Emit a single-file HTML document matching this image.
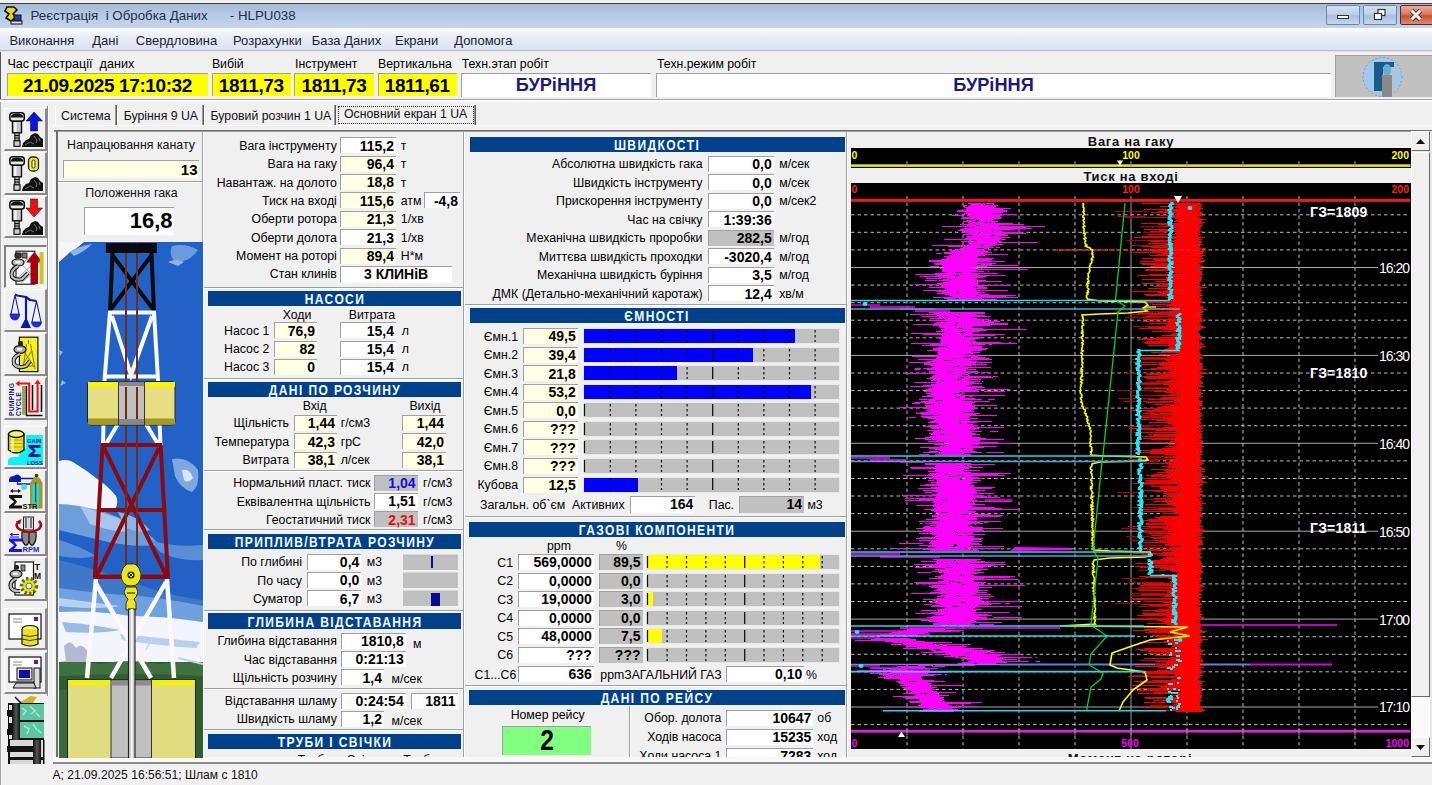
<!DOCTYPE html><html><head><meta charset="utf-8"><style>
html,body{margin:0;padding:0;background:#f0f0f0;}
body{width:1432px;height:785px;overflow:hidden;position:relative;background:#f0f0f0;font-family:"Liberation Sans",sans-serif;}
.t{position:absolute;white-space:pre;line-height:1;}
.r{position:absolute;}
svg{position:absolute;}
</style></head><body>
<div class="r" style="left:0.0px;top:0.0px;width:1432.0px;height:3.0px;background:#f2f2f2;"></div>
<div class="r" style="left:0.0px;top:3.0px;width:1432.0px;height:1.0px;background:#3a3f46;"></div>
<div class="r" style="left:0.0px;top:4.0px;width:1.0px;height:96.0px;background:#50555c;"></div>
<div class="r" style="left:0.0px;top:100.0px;width:1.0px;height:685.0px;background:#a8a8a8;"></div>
<div class="r" style="left:0.0px;top:4.0px;width:1432.0px;height:24.0px;background:linear-gradient(#a3bbd8,#b5cbe4 45%,#c3d5ea);"></div>
<div class="r" style="left:0.0px;top:28.0px;width:1432.0px;height:22.0px;background:linear-gradient(#fdfdfe,#e9edf7 40%,#dbe2f1);"></div>
<div class="r" style="left:0.0px;top:50.0px;width:1432.0px;height:1.0px;background:#b8bcc4;"></div>
<div class="r" style="left:0.0px;top:51.0px;width:1432.0px;height:1.0px;background:#e4e4e4;"></div>
<div class="t" style="left:30.5px;top:9.0px;font-size:13.3px;color:#1e2f4a;">Реєстрація  і Обробка Даних      - HLPU038</div>
<svg style="left:3px;top:5px" width="20" height="20" viewBox="0 0 20 20">
<path d="M4 2 L11 2 L14 5 L10 9 L13 12 L8 16 L3 13 L6 9 L2 6 Z" fill="#e8d820" stroke="#111" stroke-width="1.6"/>
<rect x="11" y="10" width="7" height="6" fill="#2a3aa8" stroke="#111" stroke-width="1"/>
<rect x="8" y="16" width="11" height="3" fill="#ddd" stroke="#111" stroke-width="1"/>
</svg>
<div class="r" style="left:1326.0px;top:5.0px;width:34.0px;height:20.0px;background:linear-gradient(#d4e2f1,#bcd0e8 45%,#a8c0dc 55%,#c4d8ee);border:1px solid #6f86a8;border-radius:2px;box-sizing:border-box;"></div>
<div class="r" style="left:1363.0px;top:5.0px;width:34.0px;height:20.0px;background:linear-gradient(#d4e2f1,#bcd0e8 45%,#a8c0dc 55%,#c4d8ee);border:1px solid #6f86a8;border-radius:2px;box-sizing:border-box;"></div>
<div class="r" style="left:1400.0px;top:5.0px;width:36.0px;height:20.0px;background:linear-gradient(#eeaa9a,#db7a64 45%,#c9502f 55%,#df8c74);border:1px solid #5a2a22;border-radius:2px;box-sizing:border-box;"></div>
<div class="r" style="left:1337.0px;top:15.0px;width:12.0px;height:4.0px;background:#fff;border:1px solid #333;box-sizing:border-box;"></div>
<svg style="left:1373px;top:8px" width="14" height="14" viewBox="0 0 14 14">
<rect x="5" y="1.5" width="7" height="6" fill="#fff" stroke="#333" stroke-width="1.2"/>
<rect x="1.5" y="5.5" width="7" height="6" fill="#fff" stroke="#333" stroke-width="1.2"/>
</svg>
<svg style="left:1408px;top:8px" width="16" height="14" viewBox="0 0 16 14">
<path d="M3.5 2.5 L12.5 11.5 M12.5 2.5 L3.5 11.5" stroke="#4a2a24" stroke-width="4.6"/>
<path d="M3.5 2.5 L12.5 11.5 M12.5 2.5 L3.5 11.5" stroke="#fafafa" stroke-width="3"/>
</svg>
<div class="t" style="left:9.4px;top:33.6px;font-size:13.0px;color:#1e1e32;">Виконання</div>
<div class="t" style="left:92.2px;top:33.6px;font-size:13.0px;color:#1e1e32;">Дані</div>
<div class="t" style="left:135.8px;top:33.6px;font-size:13.0px;color:#1e1e32;">Свердловина</div>
<div class="t" style="left:233.0px;top:33.6px;font-size:13.0px;color:#1e1e32;">Розрахунки</div>
<div class="t" style="left:311.8px;top:33.6px;font-size:13.0px;color:#1e1e32;">База Даних</div>
<div class="t" style="left:395.0px;top:33.6px;font-size:13.0px;color:#1e1e32;">Екрани</div>
<div class="t" style="left:454.2px;top:33.6px;font-size:13.0px;color:#1e1e32;">Допомога</div>
<div class="t" style="left:7.4px;top:58.0px;font-size:12.6px;color:#000;">Час реєстрації  даних</div>
<div class="t" style="left:211.9px;top:58.3px;font-size:12.3px;color:#000;">Вибій</div>
<div class="t" style="left:295.0px;top:58.3px;font-size:12.3px;color:#000;">Інструмент</div>
<div class="t" style="left:378.0px;top:58.3px;font-size:12.3px;color:#000;">Вертикальна</div>
<div class="t" style="left:461.7px;top:58.3px;font-size:12.3px;color:#000;">Техн.этап робіт</div>
<div class="t" style="left:657.0px;top:58.3px;font-size:12.3px;color:#000;">Техн.режим робіт</div>
<div class="r" style="left:7.0px;top:73.0px;width:201.0px;height:23.0px;background:#ffff00;border-top:1px solid #a0a0a0;border-left:1px solid #a0a0a0;box-sizing:border-box;"></div>
<div class="t" style="left:-192.5px;width:600px;text-align:center;top:75.5px;font-size:19px;font-weight:bold;color:#000;letter-spacing:-0.4px;">21.09.2025 17:10:32</div>
<div class="r" style="left:211.5px;top:73.0px;width:79.5px;height:23.0px;background:#ffff00;border-top:1px solid #a0a0a0;border-left:1px solid #a0a0a0;box-sizing:border-box;"></div>
<div class="t" style="left:-48.8px;width:600px;text-align:center;top:75.5px;font-size:19px;font-weight:bold;color:#000;letter-spacing:-0.4px;">1811,73</div>
<div class="r" style="left:294.0px;top:73.0px;width:80.0px;height:23.0px;background:#ffff00;border-top:1px solid #a0a0a0;border-left:1px solid #a0a0a0;box-sizing:border-box;"></div>
<div class="t" style="left:34.0px;width:600px;text-align:center;top:75.5px;font-size:19px;font-weight:bold;color:#000;letter-spacing:-0.4px;">1811,73</div>
<div class="r" style="left:377.5px;top:73.0px;width:79.5px;height:23.0px;background:#ffff00;border-top:1px solid #a0a0a0;border-left:1px solid #a0a0a0;box-sizing:border-box;"></div>
<div class="t" style="left:117.2px;width:600px;text-align:center;top:75.5px;font-size:19px;font-weight:bold;color:#000;letter-spacing:-0.4px;">1811,61</div>
<div class="r" style="left:460.5px;top:73.0px;width:190.5px;height:24.0px;background:#fff;border-top:1px solid #a0a0a0;border-left:1px solid #a0a0a0;box-sizing:border-box;"></div>
<div class="t" style="left:256.0px;width:600px;text-align:center;top:76.1px;font-size:18.2px;font-weight:bold;color:#1a1a7e;">БУРіННЯ</div>
<div class="r" style="left:656.0px;top:73.0px;width:675.0px;height:24.0px;background:#fff;border-top:1px solid #a0a0a0;border-left:1px solid #a0a0a0;box-sizing:border-box;"></div>
<div class="t" style="left:693.5px;width:600px;text-align:center;top:76.1px;font-size:18.2px;font-weight:bold;color:#1a1a7e;">БУРіННЯ</div>
<div class="r" style="left:1335.0px;top:55.0px;width:97.0px;height:42.0px;background:#c0c0c0;border-top:1px solid #a0a0a0;border-left:1px solid #a0a0a0;box-sizing:border-box;"></div>
<svg style="left:1357px;top:55px" width="52" height="42" viewBox="0 0 52 42">
<circle cx="25.5" cy="22" r="19.5" fill="#9ec8ec" stroke="#7a8fa6" stroke-width="0.8" stroke-dasharray="2 2"/>
<rect x="17" y="7" width="20" height="29" fill="#1c5b86"/>
<rect x="26" y="12" width="11" height="30" fill="#c0c0c0"/>
<ellipse cx="30" cy="15" rx="4" ry="6" fill="#56b3d2"/>
<path d="M25 20 L35 20 L35 42 L25 42 Z" fill="#8a8a8a"/>
</svg>
<div class="r" style="left:0.0px;top:99.0px;width:1432.0px;height:1.0px;background:#a8a8a8;"></div>
<div class="r" style="left:0.0px;top:100.0px;width:1432.0px;height:1.5px;background:#fcfcfc;"></div>
<div class="r" style="left:47.0px;top:106.0px;width:1.0px;height:590.0px;background:#8c8c8c;"></div>
<div class="r" style="left:48.0px;top:106.0px;width:1.0px;height:590.0px;background:#fff;"></div>
<div class="r" style="left:4.0px;top:108.0px;width:43.0px;height:43.0px;background:#f0f0f0;border-top:1px solid #fff;border-left:1px solid #fff;border-bottom:2px solid #8a8a8a;border-right:2px solid #8a8a8a;box-sizing:border-box;"></div>
<div class="r" style="left:4.0px;top:152.0px;width:43.0px;height:43.0px;background:#f0f0f0;border-top:1px solid #fff;border-left:1px solid #fff;border-bottom:2px solid #8a8a8a;border-right:2px solid #8a8a8a;box-sizing:border-box;"></div>
<div class="r" style="left:4.0px;top:196.0px;width:43.0px;height:42.0px;background:#f0f0f0;border-top:1px solid #fff;border-left:1px solid #fff;border-bottom:2px solid #8a8a8a;border-right:2px solid #8a8a8a;box-sizing:border-box;"></div>
<div class="r" style="left:4.0px;top:245.0px;width:43.0px;height:43.0px;background:#f4f4f4;border-top:2px solid #808080;border-left:2px solid #808080;border-bottom:1px solid #fff;border-right:1px solid #fff;box-sizing:border-box;"></div>
<div class="r" style="left:4.0px;top:289.0px;width:43.0px;height:43.0px;background:#f0f0f0;border-top:1px solid #fff;border-left:1px solid #fff;border-bottom:2px solid #8a8a8a;border-right:2px solid #8a8a8a;box-sizing:border-box;"></div>
<div class="r" style="left:4.0px;top:333.0px;width:43.0px;height:43.0px;background:#f0f0f0;border-top:1px solid #fff;border-left:1px solid #fff;border-bottom:2px solid #8a8a8a;border-right:2px solid #8a8a8a;box-sizing:border-box;"></div>
<div class="r" style="left:4.0px;top:377.0px;width:43.0px;height:43.0px;background:#f0f0f0;border-top:1px solid #fff;border-left:1px solid #fff;border-bottom:2px solid #8a8a8a;border-right:2px solid #8a8a8a;box-sizing:border-box;"></div>
<div class="r" style="left:4.0px;top:426.0px;width:43.0px;height:43.0px;background:#f0f0f0;border-top:1px solid #fff;border-left:1px solid #fff;border-bottom:2px solid #8a8a8a;border-right:2px solid #8a8a8a;box-sizing:border-box;"></div>
<div class="r" style="left:4.0px;top:470.0px;width:43.0px;height:43.0px;background:#f0f0f0;border-top:1px solid #fff;border-left:1px solid #fff;border-bottom:2px solid #8a8a8a;border-right:2px solid #8a8a8a;box-sizing:border-box;"></div>
<div class="r" style="left:4.0px;top:513.0px;width:43.0px;height:43.0px;background:#f0f0f0;border-top:1px solid #fff;border-left:1px solid #fff;border-bottom:2px solid #8a8a8a;border-right:2px solid #8a8a8a;box-sizing:border-box;"></div>
<div class="r" style="left:4.0px;top:557.0px;width:43.0px;height:44.0px;background:#f0f0f0;border-top:1px solid #fff;border-left:1px solid #fff;border-bottom:2px solid #8a8a8a;border-right:2px solid #8a8a8a;box-sizing:border-box;"></div>
<div class="r" style="left:4.0px;top:608.0px;width:43.0px;height:42.0px;background:#f0f0f0;border-top:1px solid #fff;border-left:1px solid #fff;border-bottom:2px solid #8a8a8a;border-right:2px solid #8a8a8a;box-sizing:border-box;"></div>
<div class="r" style="left:4.0px;top:652.0px;width:43.0px;height:42.0px;background:#f0f0f0;border-top:1px solid #fff;border-left:1px solid #fff;border-bottom:2px solid #8a8a8a;border-right:2px solid #8a8a8a;box-sizing:border-box;"></div>
<svg style="left:4px;top:108px" width="43" height="43" viewBox="0 0 43 43"><g transform="translate(5,4)">
<rect x="0.8" y="0.8" width="14.5" height="8.5" rx="3" fill="#e8e8e8" stroke="#111" stroke-width="1.5"/>
<path d="M1.5 5.5 Q2 1.5 8 1.5 Q14 1.5 14.5 5.5 Z" fill="#111"/>
<rect x="3.5" y="9.3" width="9" height="11.5" fill="#c8c8c8" stroke="#111" stroke-width="1.4"/>
<rect x="5" y="10" width="2.5" height="10" fill="#f4f4f4"/>
<rect x="5.8" y="20.8" width="4.4" height="8" fill="#aaa" stroke="#111" stroke-width="1.1"/>
<path d="M5.8 23.5 H10.2 M5.8 26 H10.2" stroke="#111" stroke-width="1"/>
<rect x="5" y="28.8" width="6" height="5.5" fill="#d0d0d0" stroke="#111" stroke-width="1.2"/>
</g><path d="M22 13 L30 4 L38.5 13 L33.5 13 L33.5 23 L26.5 23 L26.5 13 Z" fill="#0a14e6" stroke="#000" stroke-width="0.5"/><path transform="translate(18,24)" d="M0 15 L1 11 L4 8 L7 7 L9 3 L13 1 L16 2 L18 5 L21 7 L21 15 Z" fill="#111"/><path transform="translate(18,24)" d="M3 13 L8 10 L12 12 M12 4 L15 8 L14 11 M17 6 L18 9" stroke="#888" stroke-width="0.8" fill="none"/></svg>
<svg style="left:4px;top:152px" width="43" height="43" viewBox="0 0 43 43"><g transform="translate(5,4)">
<rect x="0.8" y="0.8" width="14.5" height="8.5" rx="3" fill="#e8e8e8" stroke="#111" stroke-width="1.5"/>
<path d="M1.5 5.5 Q2 1.5 8 1.5 Q14 1.5 14.5 5.5 Z" fill="#111"/>
<rect x="3.5" y="9.3" width="9" height="11.5" fill="#c8c8c8" stroke="#111" stroke-width="1.4"/>
<rect x="5" y="10" width="2.5" height="10" fill="#f4f4f4"/>
<rect x="5.8" y="20.8" width="4.4" height="8" fill="#aaa" stroke="#111" stroke-width="1.1"/>
<path d="M5.8 23.5 H10.2 M5.8 26 H10.2" stroke="#111" stroke-width="1"/>
<rect x="5" y="28.8" width="6" height="5.5" fill="#d0d0d0" stroke="#111" stroke-width="1.2"/>
</g><rect x="24.5" y="5" width="10" height="14" rx="4" fill="#f2ef1a" stroke="#222" stroke-width="1.3"/><rect x="28" y="8" width="3" height="8" rx="1.2" fill="#fff" stroke="#222" stroke-width="1"/><path transform="translate(18,24)" d="M0 15 L1 11 L4 8 L7 7 L9 3 L13 1 L16 2 L18 5 L21 7 L21 15 Z" fill="#111"/><path transform="translate(18,24)" d="M3 13 L8 10 L12 12 M12 4 L15 8 L14 11 M17 6 L18 9" stroke="#888" stroke-width="0.8" fill="none"/></svg>
<svg style="left:4px;top:196px" width="43" height="43" viewBox="0 0 43 43"><g transform="translate(5,4)">
<rect x="0.8" y="0.8" width="14.5" height="8.5" rx="3" fill="#e8e8e8" stroke="#111" stroke-width="1.5"/>
<path d="M1.5 5.5 Q2 1.5 8 1.5 Q14 1.5 14.5 5.5 Z" fill="#111"/>
<rect x="3.5" y="9.3" width="9" height="11.5" fill="#c8c8c8" stroke="#111" stroke-width="1.4"/>
<rect x="5" y="10" width="2.5" height="10" fill="#f4f4f4"/>
<rect x="5.8" y="20.8" width="4.4" height="8" fill="#aaa" stroke="#111" stroke-width="1.1"/>
<path d="M5.8 23.5 H10.2 M5.8 26 H10.2" stroke="#111" stroke-width="1"/>
<rect x="5" y="28.8" width="6" height="5.5" fill="#d0d0d0" stroke="#111" stroke-width="1.2"/>
</g><path d="M26.5 3 L33.5 3 L33.5 12 L38.5 12 L30 21 L22 12 L26.5 12 Z" fill="#f01010" stroke="#000" stroke-width="0.5"/><path transform="translate(18,24)" d="M0 15 L1 11 L4 8 L7 7 L9 3 L13 1 L16 2 L18 5 L21 7 L21 15 Z" fill="#111"/><path transform="translate(18,24)" d="M3 13 L8 10 L12 12 M12 4 L15 8 L14 11 M17 6 L18 9" stroke="#888" stroke-width="0.8" fill="none"/></svg>
<svg style="left:4px;top:245px" width="43" height="43" viewBox="0 0 43 43"><rect x="12" y="6.2" width="18.8" height="33" fill="#fff" stroke="#111" stroke-width="1.1"/>
<path d="M12.5 24 L30 8 M12.5 34 L30 18 M16 39 L30 27 M16 7 L30 21 M12.5 14 L30 32" stroke="#8a9a9a" stroke-width="0.9"/>
<rect x="11" y="8" width="6" height="5" rx="1.5" fill="#333" stroke="#111"/>
<rect x="18" y="8" width="5" height="5" fill="#777" stroke="#111" stroke-width="0.8"/>
<ellipse cx="14" cy="17.5" rx="6" ry="3.5" fill="#bbb" stroke="#111" stroke-width="1.2"/>
<rect x="11.5" y="16" width="5" height="2.5" fill="#f4f4f4"/>
<path d="M14 21 Q6 25 8 32 Q12 36 18 34 L24 28" stroke="#111" stroke-width="4.2" fill="none"/>
<path d="M14 21 Q6 25 8 32 Q12 36 18 34 L24 28" stroke="#bdbdbd" stroke-width="2.2" fill="none"/>
<path d="M22 17.5 L30.5 7 L39 17.5 L34 17.5 L34 39 L26.5 39 L26.5 17.5 Z" fill="#a8000c"/>
<rect x="35.6" y="7" width="4" height="32" fill="#c8c820"/></svg>
<svg style="left:4px;top:289px" width="43" height="43" viewBox="0 0 43 43"><path d="M11 5.5 L13 6.5 L22 8 L26 11 L32.5 12" stroke="#0c1aa8" stroke-width="2.2" fill="none" stroke-linejoin="round"/>
<path d="M22 8 L22 31" stroke="#0c1aa8" stroke-width="2.2"/>
<path d="M20.5 31 L23.5 31 L27 39 L16.5 39 Z" fill="#0c1aa8"/>
<path d="M11 6 L7 25 M11 6 L15 25 M32.5 12 L28 33 M32.5 12 L37 33" stroke="#0c1aa8" stroke-width="1.1" fill="none"/>
<path d="M6 25 L15.7 25 Q15 31 11 31 Q6.5 31 6 25 Z" fill="#1d2ed8" stroke="#0c1aa8" stroke-width="0.8"/>
<path d="M27.5 33 L37.5 33 Q37 38 32.5 38 Q28 38 27.5 33 Z" fill="#1d2ed8" stroke="#0c1aa8" stroke-width="0.8"/></svg>
<svg style="left:4px;top:333px" width="43" height="43" viewBox="0 0 43 43"><rect x="15.4" y="4.2" width="18.5" height="34.4" fill="#f4f018" stroke="#111" stroke-width="1.2"/>
<path d="M24.5 7 L24.5 11 M22.5 11 L19 36 M26.5 11 L31 36 M21 20 L29 32 M28 18 L19.5 30 M20 33 L31 33" stroke="#7a7a20" stroke-width="1" fill="none"/>
<rect x="14" y="8" width="5" height="4.5" rx="1.5" fill="#222"/>
<ellipse cx="16" cy="16.5" rx="6" ry="3.8" fill="#aaa" stroke="#111" stroke-width="1.2"/>
<rect x="13" y="15" width="5" height="2.5" fill="#f4f4f4"/>
<path d="M16 21 Q8 24 10 31 Q14 36 22 33 L26 28" stroke="#111" stroke-width="4.2" fill="none"/>
<path d="M16 21 Q8 24 10 31 Q14 36 22 33 L26 28" stroke="#bdbdbd" stroke-width="2.2" fill="none"/></svg>
<svg style="left:4px;top:377px" width="43" height="43" viewBox="0 0 43 43"><text x="10" y="39" transform="rotate(-90 10 39)" font-family="Liberation Sans" font-weight="bold" font-size="6.8" fill="#1a1a78" letter-spacing="0.2">PUMPING</text>
<text x="17" y="39" transform="rotate(-90 17 39)" font-family="Liberation Sans" font-weight="bold" font-size="6.8" fill="#1a1a78" letter-spacing="0.2">CYCLE</text>
<rect x="18" y="9" width="4" height="29" fill="#a0b060"/>
<path d="M18.5 10 H21.5 M18.5 13 H21.5 M18.5 16 H21.5 M18.5 19 H21.5 M18.5 22 H21.5 M18.5 25 H21.5 M18.5 28 H21.5 M18.5 31 H21.5 M18.5 34 H21.5" stroke="#6a7a30" stroke-width="0.6"/>
<path d="M22.5 9 L22.5 38.5 L38.5 38.5" stroke="#111" stroke-width="1.3" fill="none"/>
<path d="M28.5 8 V33 M37.5 8 V35" stroke="#111" stroke-width="1.6"/>
<path d="M14 6.5 H25.2 V34.5 H33.6 V5" stroke="#f01010" stroke-width="2" fill="none"/>
<path d="M11.5 6.5 L15.5 3.5 L15.5 9.5 Z M33.6 2.5 L30.5 7 L36.7 7 Z" fill="#f01010"/></svg>
<svg style="left:4px;top:426px" width="43" height="43" viewBox="0 0 43 43"><path d="M4 39 L4 34 Q5 31 10 31 L22 31 L22 9 L39 9 L39 39 Z" fill="#10f0f8"/>
<path d="M16 27 L22 22 L22 31 L14 31 Z" fill="#10f0f8"/>
<path d="M4.5 8 L4.5 24 Q12.25 30 20 24 L20 8 Z" fill="#e8e020" stroke="#111" stroke-width="1.4"/>
<ellipse cx="12.25" cy="8" rx="7.75" ry="3.5" fill="#f4f080" stroke="#111" stroke-width="1.4"/>
<path d="M6 14 H19 M6 17.5 H19 M6 21 H19" stroke="#a8a010" stroke-width="0.8"/>
<rect x="7" y="12" width="3" height="14" fill="#f8f8b0" opacity="0.7"/>
<text x="23" y="16.5" font-family="Liberation Sans" font-weight="bold" font-size="5.8" fill="#10107a">GAIN</text>
<path d="M24.5 19 H36.5 V21.64 H29.060000000000002 L31.939999999999998 25.0 L29.060000000000002 28.36 H36.5 V31 H24.5 V28.84 L29.3 25.0 L24.5 21.16 Z" fill="#10107a"/>
<text x="23" y="38.5" font-family="Liberation Sans" font-weight="bold" font-size="5.8" fill="#10107a">LOSS</text></svg>
<svg style="left:4px;top:470px" width="43" height="43" viewBox="0 0 43 43"><path d="M5 9 Q6 6 10 6 Q12 3.5 15 5 L17 7 L17 12 L5 12 Z" fill="#0c1aa8"/>
<path d="M16 8.5 H31 M13.5 12 V14 H28" stroke="#0c1aa8" stroke-width="1.3" fill="none"/>
<circle cx="20" cy="17" r="2.8" fill="#40e0e8" stroke="#90c0c8" stroke-width="0.6"/>
<path d="M26 38.5 L26 13 Q29 8 32.5 5 Q36 8 38.5 13 L38.5 38.5 Z" fill="#a09a20"/>
<path d="M29.5 14 V36 M34 14 V36" stroke="#10e0f8" stroke-width="2.2"/>
<path d="M31.7 12 V32" stroke="#0a50a0" stroke-width="1"/>
<circle cx="32.5" cy="5.5" r="1.8" fill="#333"/>
<path d="M7 21 H16" stroke="#111" stroke-width="1.2"/><path d="M6 21 L9 19 L9 23 Z M17 21 L14 19 L14 23 Z" fill="#111"/>
<path d="M5 25 H18 V27.97 H9.940000000000001 L13.06 31.75 L9.940000000000001 35.53 H18 V38.5 H5 V36.07 L10.2 31.75 L5 27.43 Z" fill="#111"/>
<text x="18.5" y="38.5" font-family="Liberation Sans" font-weight="bold" font-size="7.5" fill="#222">STR</text></svg>
<svg style="left:4px;top:513px" width="43" height="43" viewBox="0 0 43 43"><rect x="19.5" y="4" width="10" height="13" fill="#d8d8d8" stroke="#222" stroke-width="1"/>
<path d="M22 5 V15 M27 5 V15" stroke="#444" stroke-width="1.3"/>
<path d="M18 19 Q17 28 21 32 Q24 33 25 28 Q26 33 29 32 Q33 28 32 19 Z" fill="#888" stroke="#111" stroke-width="1.2"/>
<path d="M25 19 V30" stroke="#111" stroke-width="1.2"/>
<path d="M14 9 Q11 13 15 16 Q25 22 35 16 Q39 12 35 8" stroke="#a00c10" stroke-width="2.6" fill="none"/>
<path d="M12 8.5 L17.5 6 L16 11.5 Z" fill="#a00c10"/>
<path d="M6 21.5 H15 M6 24 H15" stroke="#1616e8" stroke-width="1.2"/><path d="M5.5 21.5 L8.5 19.5 L8.5 23.5 Z" fill="#1616e8"/>
<path d="M5 25.5 H18 V28.47 H9.940000000000001 L13.06 32.25 L9.940000000000001 36.03 H18 V39.0 H5 V36.57 L10.2 32.25 L5 27.93 Z" fill="#1616e8"/>
<text x="18.5" y="39" font-family="Liberation Sans" font-weight="bold" font-size="7.5" fill="#1616e8">RPM</text></svg>
<svg style="left:4px;top:557px" width="43" height="43" viewBox="0 0 43 43"><rect x="11" y="5" width="18.5" height="33" fill="#fff" stroke="#111" stroke-width="1.2"/>
<rect x="10" y="8" width="5" height="4.5" rx="1.5" fill="#222"/>
<rect x="17" y="8" width="4" height="6" fill="#888" stroke="#111" stroke-width="0.8"/>
<ellipse cx="12" cy="17" rx="6" ry="3.8" fill="#aaa" stroke="#111" stroke-width="1.2"/>
<rect x="9" y="15.5" width="5" height="2.5" fill="#f4f4f4"/>
<path d="M12 21.5 Q5 25 7 31 Q10 35 16 34" stroke="#111" stroke-width="4.2" fill="none"/>
<path d="M12 21.5 Q5 25 7 31 Q10 35 16 34" stroke="#bdbdbd" stroke-width="2.2" fill="none"/>
<circle cx="25" cy="29" r="7.5" fill="#d8e020" stroke="#6a6a10" stroke-width="3.5" stroke-dasharray="2.4 2.2"/>
<circle cx="25" cy="29" r="3" fill="#e8e8e8" stroke="#555" stroke-width="0.8"/>
<text x="30.5" y="13" font-family="Liberation Sans" font-weight="bold" font-size="9" fill="#111">T</text>
<text x="30" y="21.5" font-family="Liberation Sans" font-weight="bold" font-size="8.5" fill="#111">M</text></svg>
<svg style="left:4px;top:608px" width="43" height="43" viewBox="0 0 43 43"><rect x="5" y="6" width="32" height="25" fill="#fff" stroke="#111" stroke-width="1.2"/>
<path d="M9 11 H18 M9 14 H18" stroke="#888" stroke-width="1"/>
<rect x="30" y="9" width="4" height="4" fill="#7010a0"/>
<ellipse cx="26" cy="21" rx="8" ry="3.5" fill="#f6f060" stroke="#111" stroke-width="1.2"/>
<path d="M18 21 L18 36 Q26 40 34 36 L34 21" fill="#e8e020" stroke="#111" stroke-width="1.2"/>
<path d="M18 27 Q26 30 34 27 M18 31 Q26 34 34 31" stroke="#111" stroke-width="0.8" fill="none"/></svg>
<svg style="left:4px;top:652px" width="43" height="43" viewBox="0 0 43 43"><rect x="5" y="5" width="32" height="25" fill="#fff" stroke="#111" stroke-width="1.2"/>
<path d="M9 10 H18 M9 13 H18" stroke="#888" stroke-width="1"/>
<rect x="30" y="8" width="4" height="4" fill="#7010a0"/>
<rect x="13" y="16" width="15" height="12" fill="#ddd" stroke="#111"/><rect x="15" y="18" width="11" height="8" fill="#1010a0"/>
<rect x="30" y="16" width="6" height="20" fill="#ddd" stroke="#111"/>
<path d="M9 36 L12 31 H30 L32 36 Z" fill="#ccc" stroke="#111"/></svg>
<svg style="left:0px;top:690px" width="50" height="76" viewBox="0 690 50 76">
<defs><linearGradient id="roll" x1="0" x2="1"><stop offset="0" stop-color="#111"/><stop offset="0.5" stop-color="#555"/><stop offset="1" stop-color="#111"/></linearGradient></defs>
<path d="M15 697 L20 702 L26 699 L30 696 L37 697 L33 703 L22 704 Z" fill="#d8b020"/>
<path d="M15 697 L21 703" stroke="#111" stroke-width="1.5"/>
<rect x="8" y="703" width="36" height="61" fill="#d8d8d8"/>
<rect x="8" y="703" width="36" height="37" fill="#111"/>
<rect x="20" y="704" width="24" height="16" fill="#5cc6a4"/>
<rect x="20" y="722" width="24" height="16" fill="#5cc6a4"/>
<path d="M22 708 l4 3 l-3 4 M30 706 l5 5 l-4 3 M36 713 l4 4 M24 726 l5 3 l-2 5 M33 724 l4 6 M38 730 l3 3" stroke="#a8e8d0" stroke-width="1.5" fill="none"/>
<rect x="12" y="703" width="8" height="37" fill="url(#roll)"/>
<rect x="9" y="705" width="3" height="5" fill="#ddd"/><rect x="9" y="717" width="3" height="6" fill="#ddd"/><rect x="9" y="735" width="3" height="4" fill="#ddd"/>
<rect x="7" y="710" width="5" height="6" fill="#111"/><rect x="7" y="729" width="5" height="6" fill="#111"/>
<rect x="8" y="740" width="2" height="24" fill="#111"/>
<rect x="7" y="746" width="27" height="6" fill="#111"/>
<rect x="8" y="757" width="36" height="3" fill="#111"/>
<rect x="33" y="740" width="8" height="24" fill="url(#roll)"/>
<rect x="43" y="740" width="1.5" height="24" fill="#111"/>
</svg>
<div class="r" style="left:53.0px;top:125.0px;width:1379.0px;height:1.0px;background:#fff;"></div>
<div class="r" style="left:53.0px;top:130.0px;width:1379.0px;height:1.0px;background:#6e6e6e;"></div>
<div class="r" style="left:53.0px;top:131.0px;width:1379.0px;height:1.0px;background:#a0a0a0;"></div>
<div class="r" style="left:55.0px;top:105.0px;width:1.0px;height:20.0px;background:#fff;"></div>
<div class="r" style="left:115.0px;top:105.0px;width:1.0px;height:20.0px;background:#9a9a9a;"></div>
<div class="r" style="left:116.0px;top:105.0px;width:1.0px;height:20.0px;background:#5a5a5a;"></div>
<div class="t" style="left:61.0px;top:109.9px;font-size:12.3px;color:#111;">Система</div>
<div class="r" style="left:117.0px;top:105.0px;width:1.0px;height:20.0px;background:#fff;"></div>
<div class="r" style="left:201.5px;top:105.0px;width:1.0px;height:20.0px;background:#9a9a9a;"></div>
<div class="r" style="left:202.5px;top:105.0px;width:1.0px;height:20.0px;background:#5a5a5a;"></div>
<div class="t" style="left:123.7px;top:109.9px;font-size:12.3px;color:#111;">Буріння 9 UA</div>
<div class="r" style="left:203.5px;top:105.0px;width:1.0px;height:20.0px;background:#fff;"></div>
<div class="r" style="left:334.0px;top:105.0px;width:1.0px;height:20.0px;background:#9a9a9a;"></div>
<div class="r" style="left:335.0px;top:105.0px;width:1.0px;height:20.0px;background:#5a5a5a;"></div>
<div class="t" style="left:210.5px;top:109.9px;font-size:12.3px;color:#111;">Буровий розчин 1 UA</div>
<div class="r" style="left:338.0px;top:105.5px;width:136.0px;height:18.5px;border:1px dotted #333;box-sizing:border-box;"></div>
<div class="r" style="left:474.0px;top:105.0px;width:1.0px;height:20.0px;background:#9a9a9a;"></div>
<div class="r" style="left:475.0px;top:105.0px;width:1.0px;height:20.0px;background:#5a5a5a;"></div>
<div class="t" style="left:344.0px;top:107.6px;font-size:12.3px;color:#111;">Основний екран 1 UA</div>
<div class="r" style="left:53.0px;top:126.0px;width:1.0px;height:636.0px;background:#fff;"></div>
<div class="r" style="left:56.0px;top:131.0px;width:2.0px;height:626.0px;background:#6e6e6e;"></div>
<div class="r" style="left:53.0px;top:757.0px;width:1379.0px;height:4.5px;background:#f8f8f8;"></div>
<div class="r" style="left:53.0px;top:761.5px;width:1379.0px;height:2.0px;background:#8a8a8a;"></div>
<div class="r" style="left:202.0px;top:132.0px;width:1.0px;height:625.0px;background:#a0a0a0;"></div>
<div class="r" style="left:203.0px;top:132.0px;width:1.0px;height:625.0px;background:#fff;"></div>
<div class="t" style="left:-169.0px;width:600px;text-align:center;top:139.1px;font-size:12.4px;color:#111;">Напрацювання канату</div>
<div class="r" style="left:63.0px;top:160.0px;width:136.0px;height:17.5px;background:#ffffe6;border-top:1px solid #a0a0a0;border-left:1px solid #a0a0a0;box-sizing:border-box;"></div>
<div class="t" style="left:-402.5px;width:600px;text-align:right;top:161.6px;font-size:15px;font-weight:bold;color:#000;">13</div>
<div class="r" style="left:58.0px;top:181.0px;width:144.0px;height:1.0px;background:#a0a0a0;"></div>
<div class="r" style="left:58.0px;top:182.0px;width:144.0px;height:1.0px;background:#fff;"></div>
<div class="t" style="left:-168.5px;width:600px;text-align:center;top:187.1px;font-size:12.4px;color:#111;">Положення гака</div>
<div class="r" style="left:84.0px;top:207.0px;width:89.5px;height:27.5px;background:#fff;border-top:1px solid #a0a0a0;border-left:1px solid #a0a0a0;box-sizing:border-box;"></div>
<div class="t" style="left:-427.5px;width:600px;text-align:right;top:210.0px;font-size:22px;font-weight:bold;color:#000;">16,8</div>
<svg style="left:59px;top:242px" width="144" height="516" viewBox="59 242 144 516">
<defs><clipPath id="pc"><rect x="59" y="242" width="144" height="516"/></clipPath></defs>
<g clip-path="url(#pc)">
<rect x="59" y="242" width="144" height="516" fill="#2262c6"/>
<path d="M59 242 L84 242 Q78 248 70 252 Q64 258 59 262 Z" fill="#f4f6fa"/>
<path d="M70 252 Q80 246 92 244 Q84 252 74 256 Z" fill="#8fb3e6"/>
<path d="M172 246 Q186 243 198 250 Q190 262 176 262 Q168 256 172 246 Z" fill="#6c9bdc"/>
<path d="M168 262 Q176 258 184 262 L178 266 Z" fill="#8fb3e6"/>
<path d="M59 350 L63 352 L60 356Z M62 380 L66 383 L60 386Z" fill="#8fb3e6"/>
<!-- lower sky clouds -->
<path d="M59 456 L59 560 Q100 570 140 585 Q170 596 203 600 L203 625 L59 625 Z" fill="#3f78c8"/>
<path d="M59 500 Q90 505 120 518 Q145 528 160 545 Q130 548 100 540 Q75 534 59 530 Z" fill="#6d9edc"/>
<path d="M59 461 Q68 458 76 464 Q86 470 96 478 Q108 486 116 496 Q120 506 112 512 Q96 510 80 506 Q66 504 59 504 Z" fill="#f2f5fb"/>
<path d="M80 506 Q100 512 118 518 Q130 526 124 532 Q106 530 90 524 Z" fill="#a9c6ee"/>
<path d="M118 512 Q138 516 150 530 Q140 534 126 528 Z" fill="#8fb3e6"/>
<path d="M59 540 Q80 546 96 556 Q80 560 59 556 Z" fill="#5a8ed6"/>
<path d="M172 459 Q188 456 198 470 Q200 486 192 492 Q180 488 175 476 Z" fill="#7ea8e0"/>
<path d="M182 470 Q190 468 193 478 Q188 484 184 480 Z" fill="#dbe7f7"/>
<path d="M150 540 Q175 548 203 545 L203 560 Q180 562 160 552 Z" fill="#5a8ed6"/>
<path d="M59 588 Q100 594 140 596 Q175 600 203 606 L203 622 Q160 616 120 618 Q90 614 59 612 Z" fill="#6fa0e0"/>
<path d="M59 598 Q90 602 120 606 Q95 610 59 606 Z" fill="#b8d0f0"/>
<path d="M59 612 Q95 610 130 616 Q165 616 203 622 L203 662 Q150 664 100 662 Q75 662 59 662 Z" fill="#f2f5fb"/>
<path d="M62 622 Q90 624 120 630 Q100 634 66 632 Z" fill="#9cbce8"/>
<path d="M120 634 Q160 638 200 642 L196 648 Q160 646 122 640Z" fill="#b8cff0"/>
<rect x="59" y="662" width="144" height="96" fill="#2d5e2c"/>
<path d="M59 662 Q80 660 100 664 Q130 658 160 664 Q185 660 203 664 L203 676 Q150 672 59 676 Z" fill="#3f7040"/>
<path d="M59 690 L67 690 L67 758 L59 758 Z" fill="#3a6a38"/>
<path d="M64 646 Q70 638 76 648 Q82 642 88 652 L86 662 L66 662 Z" fill="#b4b8d4"/>
<path d="M178 658 L203 664" stroke="#c8d0dc" stroke-width="2"/>
<path d="M146 650 L152 638" stroke="#d0d4e0" stroke-width="1.5"/>
<!-- derrick black top -->
<rect x="105.8" y="243" width="51" height="10" fill="#0a0a0a"/>
<path d="M112.5 253 L110 312 M151.5 253 L154 312 M113 256 L153 309 M151 256 L111 309" stroke="#0a0a0a" stroke-width="4" fill="none"/>
<!-- white section -->
<path d="M110 312 L104.5 380 M154 312 L158 380 M112 316 L131 375 L152 316" stroke="#fafafa" stroke-width="4" fill="none"/>
<rect x="108" y="310.5" width="48" height="4" fill="#fafafa"/>
<rect x="105" y="374.5" width="53" height="4" fill="#fafafa"/>
<path d="M104.5 380 L103 446 M158 380 L160.5 446 M106 444 L118 424 M158 444 L146 424" stroke="#fafafa" stroke-width="4" fill="none"/>
<!-- red section -->
<path d="M102.6 445 L94.8 578 M160.6 445 L168 578 M104 448 L166 575 M159 448 L97 575" stroke="#8a0a10" stroke-width="4" fill="none"/>
<rect x="101" y="443" width="61" height="4" fill="#8a0a10"/>
<rect x="98" y="508" width="67" height="4" fill="#8a0a10"/>
<rect x="93" y="574.5" width="77" height="4.5" fill="#8a0a10"/>
<!-- lower white legs -->
<path d="M96 579 L87 678 M167 579 L174 678 M95 582 L151 678 M166 582 L111 678" stroke="#fafafa" stroke-width="4.5" fill="none"/>
<!-- cables -->
<path d="M126 253 L126 566 M137 253 L137 566" stroke="#7a2a12" stroke-width="2"/>
<!-- traveling block -->
<path d="M90 381.5 L172.5 381.5 L175 384 L175 422 L172.5 425 L90 425 L87.5 422 L87.5 384 Z" fill="#e6de80" stroke="#222" stroke-width="1"/>
<rect x="88" y="382" width="87" height="5" fill="#f8f400"/>
<rect x="88" y="418.5" width="87" height="6" fill="#a49a20"/>
<rect x="118.5" y="381.5" width="26" height="43.5" fill="#c0c0c0" stroke="#333" stroke-width="1"/>
<rect x="119" y="382" width="25" height="4" fill="#888"/>
<rect x="119" y="419" width="25" height="5" fill="#888"/>
<path d="M126 387 L126 419 M137 387 L137 419" stroke="#7a2a12" stroke-width="2"/>
<!-- hook -->
<path d="M127 564 L135 564 L139 568 L141 574 Q141 586 131 586 Q121 586 121 574 L123 568 Z" fill="#ece41e" stroke="#333" stroke-width="1"/>
<circle cx="131" cy="575" r="3" fill="none" stroke="#222" stroke-width="1.2"/><path d="M129 573 L133 577 M133 573 L129 577" stroke="#222" stroke-width="1"/>
<path d="M126 587 L136 587 L138 592 L136 597 L134 599 L136 603 L136 610 L126 610 L126 603 L128 599 L126 597 L124 592 Z" fill="#ece41e" stroke="#333" stroke-width="1"/>
<path d="M127 593 H135" stroke="#555" stroke-width="1.5"/>
<!-- base -->
<rect x="67.5" y="679.5" width="128" height="79" fill="#e0dc80" stroke="#222" stroke-width="1"/>
<rect x="68" y="680" width="127" height="5" fill="#f8f000"/>
<rect x="111" y="680" width="40.5" height="78" fill="#c0c0c0" stroke="#333" stroke-width="1"/>
<rect x="111.5" y="680.5" width="39.5" height="5" fill="#8e8e8e"/>
<!-- pipe -->
<rect x="128.5" y="609" width="6.5" height="150" fill="#c8c8c8" stroke="#222" stroke-width="1.1"/>
<rect x="130.8" y="609" width="2" height="150" fill="#f4f4f4"/>
</g></svg>
<div class="r" style="left:463.0px;top:132.0px;width:1.0px;height:625.0px;background:#a0a0a0;"></div>
<div class="r" style="left:464.0px;top:132.0px;width:1.0px;height:625.0px;background:#fff;"></div>
<div class="t" style="left:-263.2px;width:600px;text-align:right;top:139.8px;font-size:12.3px;color:#000;">Вага інструменту</div>
<div class="r" style="left:340.3px;top:137.3px;width:55.7px;height:16.0px;background:#fff;border-top:1px solid #a0a0a0;border-left:1px solid #a0a0a0;box-sizing:border-box;"></div>
<div class="t" style="left:-206.0px;width:600px;text-align:right;top:138.6px;font-size:14px;font-weight:bold;color:#000;">115,2</div>
<div class="t" style="left:400.8px;top:139.8px;font-size:12.3px;color:#000;">т</div>
<div class="t" style="left:-263.2px;width:600px;text-align:right;top:158.2px;font-size:12.3px;color:#000;">Вага на гаку</div>
<div class="r" style="left:340.3px;top:155.7px;width:55.7px;height:16.0px;background:#ffffe6;border-top:1px solid #a0a0a0;border-left:1px solid #a0a0a0;box-sizing:border-box;"></div>
<div class="t" style="left:-206.0px;width:600px;text-align:right;top:157.0px;font-size:14px;font-weight:bold;color:#000;">96,4</div>
<div class="t" style="left:400.8px;top:158.2px;font-size:12.3px;color:#000;">т</div>
<div class="t" style="left:-263.2px;width:600px;text-align:right;top:176.5px;font-size:12.3px;color:#000;">Навантаж. на долото</div>
<div class="r" style="left:340.3px;top:174.0px;width:55.7px;height:16.0px;background:#ffffe6;border-top:1px solid #a0a0a0;border-left:1px solid #a0a0a0;box-sizing:border-box;"></div>
<div class="t" style="left:-206.0px;width:600px;text-align:right;top:175.4px;font-size:14px;font-weight:bold;color:#000;">18,8</div>
<div class="t" style="left:400.8px;top:176.5px;font-size:12.3px;color:#000;">т</div>
<div class="t" style="left:-263.2px;width:600px;text-align:right;top:194.9px;font-size:12.3px;color:#000;">Тиск на вході</div>
<div class="r" style="left:340.3px;top:192.4px;width:55.7px;height:16.0px;background:#ffffe6;border-top:1px solid #a0a0a0;border-left:1px solid #a0a0a0;box-sizing:border-box;"></div>
<div class="t" style="left:-206.0px;width:600px;text-align:right;top:193.8px;font-size:14px;font-weight:bold;color:#000;">115,6</div>
<div class="t" style="left:400.8px;top:194.9px;font-size:12.3px;color:#000;">атм</div>
<div class="t" style="left:-263.2px;width:600px;text-align:right;top:213.3px;font-size:12.3px;color:#000;">Оберти ротора</div>
<div class="r" style="left:340.3px;top:210.8px;width:55.7px;height:16.0px;background:#ffffe6;border-top:1px solid #a0a0a0;border-left:1px solid #a0a0a0;box-sizing:border-box;"></div>
<div class="t" style="left:-206.0px;width:600px;text-align:right;top:212.1px;font-size:14px;font-weight:bold;color:#000;">21,3</div>
<div class="t" style="left:400.8px;top:213.3px;font-size:12.3px;color:#000;">1/хв</div>
<div class="t" style="left:-263.2px;width:600px;text-align:right;top:231.6px;font-size:12.3px;color:#000;">Оберти долота</div>
<div class="r" style="left:340.3px;top:229.2px;width:55.7px;height:16.0px;background:#fff;border-top:1px solid #a0a0a0;border-left:1px solid #a0a0a0;box-sizing:border-box;"></div>
<div class="t" style="left:-206.0px;width:600px;text-align:right;top:230.5px;font-size:14px;font-weight:bold;color:#000;">21,3</div>
<div class="t" style="left:400.8px;top:231.6px;font-size:12.3px;color:#000;">1/хв</div>
<div class="t" style="left:-263.2px;width:600px;text-align:right;top:250.0px;font-size:12.3px;color:#000;">Момент на роторі</div>
<div class="r" style="left:340.3px;top:247.5px;width:55.7px;height:16.0px;background:#ffffe6;border-top:1px solid #a0a0a0;border-left:1px solid #a0a0a0;box-sizing:border-box;"></div>
<div class="t" style="left:-206.0px;width:600px;text-align:right;top:248.9px;font-size:14px;font-weight:bold;color:#000;">89,4</div>
<div class="t" style="left:400.8px;top:250.0px;font-size:12.3px;color:#000;">Н*м</div>
<div class="r" style="left:424.0px;top:192.4px;width:36.0px;height:16.0px;background:#fff;border-top:1px solid #a0a0a0;border-left:1px solid #a0a0a0;box-sizing:border-box;"></div>
<div class="t" style="left:-142.0px;width:600px;text-align:right;top:193.8px;font-size:14px;font-weight:bold;color:#000;">-4,8</div>
<div class="t" style="left:-263.2px;width:600px;text-align:right;top:268.4px;font-size:12.3px;color:#000;">Стан клинів</div>
<div class="r" style="left:340.3px;top:265.9px;width:111.7px;height:17.0px;background:#fff;border-top:1px solid #a0a0a0;border-left:1px solid #a0a0a0;box-sizing:border-box;"></div>
<div class="t" style="left:96.1px;width:600px;text-align:center;top:267.2px;font-size:14px;font-weight:bold;color:#000;">3 КЛИНіВ</div>
<div class="r" style="left:204.0px;top:286.5px;width:259.0px;height:1.0px;background:#a0a0a0;"></div>
<div class="r" style="left:204.0px;top:287.5px;width:259.0px;height:1.0px;background:#fff;"></div>
<div class="r" style="left:208.2px;top:291.0px;width:252.8px;height:15.0px;background:#004189;"></div>
<div class="t" style="left:34.6px;width:600px;text-align:center;top:291.5px;font-size:14px;font-weight:bold;color:#f4f8ff;letter-spacing:1.6px;transform:scaleX(0.86);">НАСОСИ</div>
<div class="t" style="left:-3.0px;width:600px;text-align:center;top:309.2px;font-size:12.3px;color:#000;">Ходи</div>
<div class="t" style="left:72.0px;width:600px;text-align:center;top:309.2px;font-size:12.3px;color:#000;">Витрата</div>
<div class="t" style="left:-330.7px;width:600px;text-align:right;top:324.7px;font-size:12.3px;color:#000;">Насос 1</div>
<div class="r" style="left:273.6px;top:322.2px;width:43.4px;height:16.0px;background:#ffffe6;border-top:1px solid #a0a0a0;border-left:1px solid #a0a0a0;box-sizing:border-box;"></div>
<div class="t" style="left:-285.0px;width:600px;text-align:right;top:323.5px;font-size:14px;font-weight:bold;color:#000;">76,9</div>
<div class="r" style="left:340.3px;top:322.2px;width:55.7px;height:16.0px;background:#fff;border-top:1px solid #a0a0a0;border-left:1px solid #a0a0a0;box-sizing:border-box;"></div>
<div class="t" style="left:-206.0px;width:600px;text-align:right;top:323.5px;font-size:14px;font-weight:bold;color:#000;">15,4</div>
<div class="t" style="left:401.8px;top:324.7px;font-size:12.3px;color:#000;">л</div>
<div class="t" style="left:-330.7px;width:600px;text-align:right;top:343.1px;font-size:12.3px;color:#000;">Насос 2</div>
<div class="r" style="left:273.6px;top:340.6px;width:43.4px;height:16.0px;background:#ffffe6;border-top:1px solid #a0a0a0;border-left:1px solid #a0a0a0;box-sizing:border-box;"></div>
<div class="t" style="left:-285.0px;width:600px;text-align:right;top:341.9px;font-size:14px;font-weight:bold;color:#000;">82</div>
<div class="r" style="left:340.3px;top:340.6px;width:55.7px;height:16.0px;background:#fff;border-top:1px solid #a0a0a0;border-left:1px solid #a0a0a0;box-sizing:border-box;"></div>
<div class="t" style="left:-206.0px;width:600px;text-align:right;top:341.9px;font-size:14px;font-weight:bold;color:#000;">15,4</div>
<div class="t" style="left:401.8px;top:343.1px;font-size:12.3px;color:#000;">л</div>
<div class="t" style="left:-330.7px;width:600px;text-align:right;top:361.4px;font-size:12.3px;color:#000;">Насос 3</div>
<div class="r" style="left:273.6px;top:358.9px;width:43.4px;height:16.0px;background:#ffffe6;border-top:1px solid #a0a0a0;border-left:1px solid #a0a0a0;box-sizing:border-box;"></div>
<div class="t" style="left:-285.0px;width:600px;text-align:right;top:360.3px;font-size:14px;font-weight:bold;color:#000;">0</div>
<div class="r" style="left:340.3px;top:358.9px;width:55.7px;height:16.0px;background:#fff;border-top:1px solid #a0a0a0;border-left:1px solid #a0a0a0;box-sizing:border-box;"></div>
<div class="t" style="left:-206.0px;width:600px;text-align:right;top:360.3px;font-size:14px;font-weight:bold;color:#000;">15,4</div>
<div class="t" style="left:401.8px;top:361.4px;font-size:12.3px;color:#000;">л</div>
<div class="r" style="left:204.0px;top:378.0px;width:259.0px;height:1.0px;background:#a0a0a0;"></div>
<div class="r" style="left:204.0px;top:379.0px;width:259.0px;height:1.0px;background:#fff;"></div>
<div class="r" style="left:208.2px;top:382.4px;width:252.8px;height:14.6px;background:#004189;"></div>
<div class="t" style="left:34.6px;width:600px;text-align:center;top:382.5px;font-size:14px;font-weight:bold;color:#f4f8ff;letter-spacing:1.6px;transform:scaleX(0.86);">ДАНІ ПО РОЗЧИНУ</div>
<div class="t" style="left:14.7px;width:600px;text-align:center;top:400.2px;font-size:12.3px;color:#000;">Вхід</div>
<div class="t" style="left:125.0px;width:600px;text-align:center;top:400.2px;font-size:12.3px;color:#000;">Вихід</div>
<div class="t" style="left:-311.0px;width:600px;text-align:right;top:417.4px;font-size:12.3px;color:#000;">Щільність</div>
<div class="r" style="left:293.5px;top:414.9px;width:43.5px;height:16.0px;background:#ffffe6;border-top:1px solid #a0a0a0;border-left:1px solid #a0a0a0;box-sizing:border-box;"></div>
<div class="t" style="left:-265.0px;width:600px;text-align:right;top:416.2px;font-size:14px;font-weight:bold;color:#000;">1,44</div>
<div class="t" style="left:340.7px;top:417.4px;font-size:12.3px;color:#000;">г/см3</div>
<div class="r" style="left:402.4px;top:414.9px;width:43.6px;height:16.0px;background:#ffffe6;border-top:1px solid #a0a0a0;border-left:1px solid #a0a0a0;box-sizing:border-box;"></div>
<div class="t" style="left:-156.0px;width:600px;text-align:right;top:416.2px;font-size:14px;font-weight:bold;color:#000;">1,44</div>
<div class="t" style="left:-311.0px;width:600px;text-align:right;top:435.8px;font-size:12.3px;color:#000;">Температура</div>
<div class="r" style="left:293.5px;top:433.3px;width:43.5px;height:16.0px;background:#ffffe6;border-top:1px solid #a0a0a0;border-left:1px solid #a0a0a0;box-sizing:border-box;"></div>
<div class="t" style="left:-265.0px;width:600px;text-align:right;top:434.6px;font-size:14px;font-weight:bold;color:#000;">42,3</div>
<div class="t" style="left:340.7px;top:435.8px;font-size:12.3px;color:#000;">грС</div>
<div class="r" style="left:402.4px;top:433.3px;width:43.6px;height:16.0px;background:#ffffe6;border-top:1px solid #a0a0a0;border-left:1px solid #a0a0a0;box-sizing:border-box;"></div>
<div class="t" style="left:-156.0px;width:600px;text-align:right;top:434.6px;font-size:14px;font-weight:bold;color:#000;">42,0</div>
<div class="t" style="left:-311.0px;width:600px;text-align:right;top:454.1px;font-size:12.3px;color:#000;">Витрата</div>
<div class="r" style="left:293.5px;top:451.6px;width:43.5px;height:16.0px;background:#ffffe6;border-top:1px solid #a0a0a0;border-left:1px solid #a0a0a0;box-sizing:border-box;"></div>
<div class="t" style="left:-265.0px;width:600px;text-align:right;top:453.0px;font-size:14px;font-weight:bold;color:#000;">38,1</div>
<div class="t" style="left:340.7px;top:454.1px;font-size:12.3px;color:#000;">л/сек</div>
<div class="r" style="left:402.4px;top:451.6px;width:43.6px;height:16.0px;background:#ffffe6;border-top:1px solid #a0a0a0;border-left:1px solid #a0a0a0;box-sizing:border-box;"></div>
<div class="t" style="left:-156.0px;width:600px;text-align:right;top:453.0px;font-size:14px;font-weight:bold;color:#000;">38,1</div>
<div class="r" style="left:204.0px;top:470.0px;width:259.0px;height:1.0px;background:#a0a0a0;"></div>
<div class="r" style="left:204.0px;top:471.0px;width:259.0px;height:1.0px;background:#fff;"></div>
<div class="t" style="left:-229.5px;width:600px;text-align:right;top:477.1px;font-size:12.3px;color:#000;">Нормальний пласт. тиск</div>
<div class="r" style="left:374.3px;top:474.6px;width:43.3px;height:16.0px;background:#c0c0c0;border-top:1px solid #a0a0a0;border-left:1px solid #a0a0a0;box-sizing:border-box;"></div>
<div class="t" style="left:-184.4px;width:600px;text-align:right;top:475.9px;font-size:14px;font-weight:bold;color:#1010e0;">1,04</div>
<div class="t" style="left:423.0px;top:477.1px;font-size:12.3px;color:#000;">г/см3</div>
<div class="t" style="left:-229.5px;width:600px;text-align:right;top:495.5px;font-size:12.3px;color:#000;">Еквівалентна щільність</div>
<div class="r" style="left:374.3px;top:493.0px;width:43.3px;height:16.0px;background:#fff;border-top:1px solid #a0a0a0;border-left:1px solid #a0a0a0;box-sizing:border-box;"></div>
<div class="t" style="left:-184.4px;width:600px;text-align:right;top:494.3px;font-size:14px;font-weight:bold;color:#000;">1,51</div>
<div class="t" style="left:423.0px;top:495.5px;font-size:12.3px;color:#000;">г/см3</div>
<div class="t" style="left:-229.5px;width:600px;text-align:right;top:513.8px;font-size:12.3px;color:#000;">Геостатичний тиск</div>
<div class="r" style="left:374.3px;top:511.3px;width:43.3px;height:16.0px;background:#c0c0c0;border-top:1px solid #a0a0a0;border-left:1px solid #a0a0a0;box-sizing:border-box;"></div>
<div class="t" style="left:-184.4px;width:600px;text-align:right;top:512.7px;font-size:14px;font-weight:bold;color:#e01010;">2,31</div>
<div class="t" style="left:423.0px;top:513.8px;font-size:12.3px;color:#000;">г/см3</div>
<div class="r" style="left:204.0px;top:529.0px;width:259.0px;height:1.0px;background:#a0a0a0;"></div>
<div class="r" style="left:204.0px;top:530.0px;width:259.0px;height:1.0px;background:#fff;"></div>
<div class="r" style="left:208.2px;top:534.2px;width:252.8px;height:14.8px;background:#004189;"></div>
<div class="t" style="left:34.6px;width:600px;text-align:center;top:534.5px;font-size:14px;font-weight:bold;color:#f4f8ff;letter-spacing:1.6px;transform:scaleX(0.86);">ПРИПЛИВ/ВТРАТА РОЗЧИНУ</div>
<div class="t" style="left:-298.0px;width:600px;text-align:right;top:556.2px;font-size:12.3px;color:#000;">По глибині</div>
<div class="r" style="left:307.2px;top:553.7px;width:54.1px;height:16.0px;background:#fff;border-top:1px solid #a0a0a0;border-left:1px solid #a0a0a0;box-sizing:border-box;"></div>
<div class="t" style="left:-240.7px;width:600px;text-align:right;top:555.0px;font-size:14px;font-weight:bold;color:#000;">0,4</div>
<div class="t" style="left:366.7px;top:556.2px;font-size:12.3px;color:#000;">м3</div>
<div class="r" style="left:403.0px;top:553.7px;width:55.0px;height:16.0px;background:#c0c0c0;border-top:1px solid #d8d8d8;box-sizing:border-box;"></div>
<div class="t" style="left:-298.0px;width:600px;text-align:right;top:574.6px;font-size:12.3px;color:#000;">По часу</div>
<div class="r" style="left:307.2px;top:572.1px;width:54.1px;height:16.0px;background:#fff;border-top:1px solid #a0a0a0;border-left:1px solid #a0a0a0;box-sizing:border-box;"></div>
<div class="t" style="left:-240.7px;width:600px;text-align:right;top:573.4px;font-size:14px;font-weight:bold;color:#000;">0,0</div>
<div class="t" style="left:366.7px;top:574.6px;font-size:12.3px;color:#000;">м3</div>
<div class="r" style="left:403.0px;top:572.1px;width:55.0px;height:16.0px;background:#c0c0c0;border-top:1px solid #d8d8d8;box-sizing:border-box;"></div>
<div class="t" style="left:-298.0px;width:600px;text-align:right;top:592.9px;font-size:12.3px;color:#000;">Суматор</div>
<div class="r" style="left:307.2px;top:590.4px;width:54.1px;height:16.0px;background:#fff;border-top:1px solid #a0a0a0;border-left:1px solid #a0a0a0;box-sizing:border-box;"></div>
<div class="t" style="left:-240.7px;width:600px;text-align:right;top:591.8px;font-size:14px;font-weight:bold;color:#000;">6,7</div>
<div class="t" style="left:366.7px;top:592.9px;font-size:12.3px;color:#000;">м3</div>
<div class="r" style="left:403.0px;top:590.4px;width:55.0px;height:16.0px;background:#c0c0c0;border-top:1px solid #d8d8d8;box-sizing:border-box;"></div>
<div class="r" style="left:431.0px;top:555.7px;width:2.0px;height:12.0px;background:#0a0a90;"></div>
<div class="r" style="left:430.6px;top:592.5px;width:9.7px;height:13.0px;background:#0a0a90;"></div>
<div class="r" style="left:204.0px;top:609.5px;width:259.0px;height:1.0px;background:#a0a0a0;"></div>
<div class="r" style="left:204.0px;top:610.5px;width:259.0px;height:1.0px;background:#fff;"></div>
<div class="r" style="left:208.2px;top:613.4px;width:252.8px;height:15.6px;background:#004189;"></div>
<div class="t" style="left:34.6px;width:600px;text-align:center;top:614.5px;font-size:14px;font-weight:bold;color:#f4f8ff;letter-spacing:1.6px;transform:scaleX(0.86);">ГЛИБИНА ВІДСТАВАННЯ</div>
<div class="t" style="left:-263.2px;width:600px;text-align:right;top:635.0px;font-size:12.3px;color:#000;">Глибина відставання</div>
<div class="r" style="left:340.7px;top:632.5px;width:65.0px;height:16.0px;background:#fff;border-top:1px solid #a0a0a0;border-left:1px solid #a0a0a0;box-sizing:border-box;"></div>
<div class="t" style="left:-196.3px;width:600px;text-align:right;top:633.8px;font-size:14px;font-weight:bold;color:#000;">1810,8</div>
<div class="t" style="left:413.0px;top:637.6px;font-size:12.3px;color:#000;">м</div>
<div class="t" style="left:-263.2px;width:600px;text-align:right;top:653.5px;font-size:12.3px;color:#000;">Час відставання</div>
<div class="r" style="left:340.7px;top:651.0px;width:65.0px;height:16.0px;background:#fff;border-top:1px solid #a0a0a0;border-left:1px solid #a0a0a0;box-sizing:border-box;"></div>
<div class="t" style="left:-196.3px;width:600px;text-align:right;top:652.3px;font-size:14px;font-weight:bold;color:#000;">0:21:13</div>
<div class="t" style="left:-263.2px;width:600px;text-align:right;top:671.8px;font-size:12.3px;color:#000;">Щільність розчину</div>
<div class="r" style="left:340.7px;top:669.3px;width:43.3px;height:16.0px;background:#fff;border-top:1px solid #a0a0a0;border-left:1px solid #a0a0a0;box-sizing:border-box;"></div>
<div class="t" style="left:-218.0px;width:600px;text-align:right;top:670.6px;font-size:14px;font-weight:bold;color:#000;">1,4</div>
<div class="t" style="left:391.6px;top:673.4px;font-size:12.3px;color:#000;">м/сек</div>
<div class="r" style="left:204.0px;top:687.5px;width:259.0px;height:1.0px;background:#a0a0a0;"></div>
<div class="r" style="left:204.0px;top:688.5px;width:259.0px;height:1.0px;background:#fff;"></div>
<div class="t" style="left:-263.2px;width:600px;text-align:right;top:695.2px;font-size:12.3px;color:#000;">Відставання шламу</div>
<div class="r" style="left:340.7px;top:692.7px;width:65.0px;height:16.0px;background:#fff;border-top:1px solid #a0a0a0;border-left:1px solid #a0a0a0;box-sizing:border-box;"></div>
<div class="t" style="left:-196.3px;width:600px;text-align:right;top:694.0px;font-size:14px;font-weight:bold;color:#000;">0:24:54</div>
<div class="r" style="left:411.0px;top:692.7px;width:46.6px;height:16.0px;background:#fff;border-top:1px solid #a0a0a0;border-left:1px solid #a0a0a0;box-sizing:border-box;"></div>
<div class="t" style="left:-144.4px;width:600px;text-align:right;top:694.0px;font-size:14px;font-weight:bold;color:#000;">1811</div>
<div class="t" style="left:-263.2px;width:600px;text-align:right;top:713.3px;font-size:12.3px;color:#000;">Швидкість шламу</div>
<div class="r" style="left:340.7px;top:710.8px;width:43.3px;height:16.0px;background:#fff;border-top:1px solid #a0a0a0;border-left:1px solid #a0a0a0;box-sizing:border-box;"></div>
<div class="t" style="left:-218.0px;width:600px;text-align:right;top:712.1px;font-size:14px;font-weight:bold;color:#000;">1,2</div>
<div class="t" style="left:391.6px;top:714.9px;font-size:12.3px;color:#000;">м/сек</div>
<div class="r" style="left:204.0px;top:729.3px;width:259.0px;height:1.0px;background:#a0a0a0;"></div>
<div class="r" style="left:204.0px;top:730.3px;width:259.0px;height:1.0px;background:#fff;"></div>
<div class="r" style="left:208.2px;top:733.8px;width:252.8px;height:15.2px;background:#004189;"></div>
<div class="t" style="left:34.6px;width:600px;text-align:center;top:734.5px;font-size:14px;font-weight:bold;color:#f4f8ff;letter-spacing:1.6px;transform:scaleX(0.86);">ТРУБИ І СВІЧКИ</div>
<div class="r" style="left:204px;top:749px;width:259px;height:8px;overflow:hidden;">
<div class="t" style="left:77px;width:60px;text-align:center;top:4.6px;font-size:12.3px;color:#111">Труб</div>
<div class="t" style="left:131px;width:60px;text-align:center;top:4.6px;font-size:12.3px;color:#111">Свічок</div>
<div class="t" style="left:191px;width:60px;text-align:center;top:4.6px;font-size:12.3px;color:#111">Труб ав</div>
</div>
<div class="r" style="left:846.0px;top:132.0px;width:1.0px;height:625.0px;background:#a0a0a0;"></div>
<div class="r" style="left:847.0px;top:132.0px;width:1.0px;height:625.0px;background:#fff;"></div>
<div class="r" style="left:469.5px;top:136.8px;width:375.8px;height:15.2px;background:#004189;"></div>
<div class="t" style="left:357.4px;width:600px;text-align:center;top:137.5px;font-size:14px;font-weight:bold;color:#f4f8ff;letter-spacing:1.6px;transform:scaleX(0.86);">ШВИДКОСТІ</div>
<div class="t" style="left:102.5px;width:600px;text-align:right;top:158.4px;font-size:12.3px;color:#000;">Абсолютна швидкість гака</div>
<div class="r" style="left:708.4px;top:155.9px;width:65.3px;height:16.0px;background:#fff;border-top:1px solid #a0a0a0;border-left:1px solid #a0a0a0;box-sizing:border-box;"></div>
<div class="t" style="left:171.7px;width:600px;text-align:right;top:157.2px;font-size:14px;font-weight:bold;color:#000;">0,0</div>
<div class="t" style="left:779.2px;top:158.4px;font-size:12.3px;color:#000;">м/сек</div>
<div class="t" style="left:102.5px;width:600px;text-align:right;top:176.9px;font-size:12.3px;color:#000;">Швидкість інструменту</div>
<div class="r" style="left:708.4px;top:174.4px;width:65.3px;height:16.0px;background:#fff;border-top:1px solid #a0a0a0;border-left:1px solid #a0a0a0;box-sizing:border-box;"></div>
<div class="t" style="left:171.7px;width:600px;text-align:right;top:175.7px;font-size:14px;font-weight:bold;color:#000;">0,0</div>
<div class="t" style="left:779.2px;top:176.9px;font-size:12.3px;color:#000;">м/сек</div>
<div class="t" style="left:102.5px;width:600px;text-align:right;top:195.3px;font-size:12.3px;color:#000;">Прискорення інструменту</div>
<div class="r" style="left:708.4px;top:192.8px;width:65.3px;height:16.0px;background:#fff;border-top:1px solid #a0a0a0;border-left:1px solid #a0a0a0;box-sizing:border-box;"></div>
<div class="t" style="left:171.7px;width:600px;text-align:right;top:194.2px;font-size:14px;font-weight:bold;color:#000;">0,0</div>
<div class="t" style="left:779.2px;top:195.3px;font-size:12.3px;color:#000;">м/сек2</div>
<div class="t" style="left:102.5px;width:600px;text-align:right;top:213.8px;font-size:12.3px;color:#000;">Час на свічку</div>
<div class="r" style="left:708.4px;top:211.3px;width:65.3px;height:16.0px;background:#fff;border-top:1px solid #a0a0a0;border-left:1px solid #a0a0a0;box-sizing:border-box;"></div>
<div class="t" style="left:171.7px;width:600px;text-align:right;top:212.7px;font-size:14px;font-weight:bold;color:#000;">1:39:36</div>
<div class="t" style="left:102.5px;width:600px;text-align:right;top:232.3px;font-size:12.3px;color:#000;">Механічна швидкість проробки</div>
<div class="r" style="left:708.4px;top:229.8px;width:65.3px;height:16.0px;background:#c0c0c0;border-top:1px solid #a0a0a0;border-left:1px solid #a0a0a0;box-sizing:border-box;"></div>
<div class="t" style="left:171.7px;width:600px;text-align:right;top:231.1px;font-size:14px;font-weight:bold;color:#000;">282,5</div>
<div class="t" style="left:779.2px;top:232.3px;font-size:12.3px;color:#000;">м/год</div>
<div class="t" style="left:102.5px;width:600px;text-align:right;top:250.7px;font-size:12.3px;color:#000;">Миттєва швидкість проходки</div>
<div class="r" style="left:708.4px;top:248.2px;width:65.3px;height:16.0px;background:#fff;border-top:1px solid #a0a0a0;border-left:1px solid #a0a0a0;box-sizing:border-box;"></div>
<div class="t" style="left:171.7px;width:600px;text-align:right;top:249.6px;font-size:14px;font-weight:bold;color:#000;">-3020,4</div>
<div class="t" style="left:779.2px;top:250.7px;font-size:12.3px;color:#000;">м/год</div>
<div class="t" style="left:102.5px;width:600px;text-align:right;top:269.2px;font-size:12.3px;color:#000;">Механічна швидкість буріння</div>
<div class="r" style="left:708.4px;top:266.7px;width:65.3px;height:16.0px;background:#fff;border-top:1px solid #a0a0a0;border-left:1px solid #a0a0a0;box-sizing:border-box;"></div>
<div class="t" style="left:171.7px;width:600px;text-align:right;top:268.1px;font-size:14px;font-weight:bold;color:#000;">3,5</div>
<div class="t" style="left:779.2px;top:269.2px;font-size:12.3px;color:#000;">м/год</div>
<div class="t" style="left:102.5px;width:600px;text-align:right;top:287.7px;font-size:12.3px;color:#000;">ДМК (Детально-механічний каротаж)</div>
<div class="r" style="left:708.4px;top:285.2px;width:65.3px;height:16.0px;background:#fff;border-top:1px solid #a0a0a0;border-left:1px solid #a0a0a0;box-sizing:border-box;"></div>
<div class="t" style="left:171.7px;width:600px;text-align:right;top:286.5px;font-size:14px;font-weight:bold;color:#000;">12,4</div>
<div class="t" style="left:779.2px;top:287.7px;font-size:12.3px;color:#000;">хв/м</div>
<div class="r" style="left:465.0px;top:304.0px;width:381.0px;height:1.0px;background:#a0a0a0;"></div>
<div class="r" style="left:465.0px;top:305.0px;width:381.0px;height:1.0px;background:#fff;"></div>
<div class="r" style="left:469.8px;top:308.4px;width:375.2px;height:14.6px;background:#004189;"></div>
<div class="t" style="left:357.4px;width:600px;text-align:center;top:308.5px;font-size:14px;font-weight:bold;color:#f4f8ff;letter-spacing:1.6px;transform:scaleX(0.86);">ЄМНОСТІ</div>
<div class="t" style="left:-82.0px;width:600px;text-align:right;top:330.5px;font-size:12.3px;color:#000;">Ємн.1</div>
<div class="r" style="left:523.0px;top:328.0px;width:54.7px;height:16.0px;background:#ffffe6;border-top:1px solid #a0a0a0;border-left:1px solid #a0a0a0;box-sizing:border-box;"></div>
<div class="t" style="left:-24.3px;width:600px;text-align:right;top:329.3px;font-size:14px;font-weight:bold;color:#000;">49,5</div>
<div class="r" style="left:583.3px;top:328.0px;width:256.4px;height:16.0px;background:#c0c0c0;border:1px solid #e8e8e8;box-sizing:border-box;"></div>
<div class="r" style="left:584.3px;top:329.0px;width:211.1px;height:14.0px;background:#0000ff;"></div>
<svg style="left:583.3px;top:328.0px" width="256.4000000000001" height="16"><line x1="27.3" y1="2" x2="27.3" y2="14" stroke="#111" stroke-width="1.2" stroke-dasharray="2.5 2.5"/><line x1="52.9" y1="2" x2="52.9" y2="14" stroke="#111" stroke-width="1.2" stroke-dasharray="2.5 2.5"/><line x1="78.5" y1="2" x2="78.5" y2="14" stroke="#111" stroke-width="1.2" stroke-dasharray="2.5 2.5"/><line x1="104.1" y1="2" x2="104.1" y2="14" stroke="#111" stroke-width="1.2" stroke-dasharray="2.5 2.5"/><line x1="129.7" y1="2" x2="129.7" y2="14" stroke="#111" stroke-width="1.3"/><line x1="155.3" y1="2" x2="155.3" y2="14" stroke="#111" stroke-width="1.2" stroke-dasharray="2.5 2.5"/><line x1="180.9" y1="2" x2="180.9" y2="14" stroke="#111" stroke-width="1.2" stroke-dasharray="2.5 2.5"/><line x1="206.5" y1="2" x2="206.5" y2="14" stroke="#111" stroke-width="1.2" stroke-dasharray="2.5 2.5"/><line x1="232.1" y1="2" x2="232.1" y2="14" stroke="#111" stroke-width="1.2" stroke-dasharray="2.5 2.5"/></svg>
<div class="t" style="left:-82.0px;width:600px;text-align:right;top:349.0px;font-size:12.3px;color:#000;">Ємн.2</div>
<div class="r" style="left:523.0px;top:346.6px;width:54.7px;height:16.0px;background:#ffffe6;border-top:1px solid #a0a0a0;border-left:1px solid #a0a0a0;box-sizing:border-box;"></div>
<div class="t" style="left:-24.3px;width:600px;text-align:right;top:347.9px;font-size:14px;font-weight:bold;color:#000;">39,4</div>
<div class="r" style="left:583.3px;top:346.6px;width:256.4px;height:16.0px;background:#c0c0c0;border:1px solid #e8e8e8;box-sizing:border-box;"></div>
<div class="r" style="left:584.3px;top:347.6px;width:168.5px;height:14.0px;background:#0000ff;"></div>
<svg style="left:583.3px;top:346.56px" width="256.4000000000001" height="16"><line x1="27.3" y1="2" x2="27.3" y2="14" stroke="#111" stroke-width="1.2" stroke-dasharray="2.5 2.5"/><line x1="52.9" y1="2" x2="52.9" y2="14" stroke="#111" stroke-width="1.2" stroke-dasharray="2.5 2.5"/><line x1="78.5" y1="2" x2="78.5" y2="14" stroke="#111" stroke-width="1.2" stroke-dasharray="2.5 2.5"/><line x1="104.1" y1="2" x2="104.1" y2="14" stroke="#111" stroke-width="1.2" stroke-dasharray="2.5 2.5"/><line x1="129.7" y1="2" x2="129.7" y2="14" stroke="#111" stroke-width="1.3"/><line x1="155.3" y1="2" x2="155.3" y2="14" stroke="#111" stroke-width="1.2" stroke-dasharray="2.5 2.5"/><line x1="180.9" y1="2" x2="180.9" y2="14" stroke="#111" stroke-width="1.2" stroke-dasharray="2.5 2.5"/><line x1="206.5" y1="2" x2="206.5" y2="14" stroke="#111" stroke-width="1.2" stroke-dasharray="2.5 2.5"/><line x1="232.1" y1="2" x2="232.1" y2="14" stroke="#111" stroke-width="1.2" stroke-dasharray="2.5 2.5"/></svg>
<div class="t" style="left:-82.0px;width:600px;text-align:right;top:367.6px;font-size:12.3px;color:#000;">Ємн.3</div>
<div class="r" style="left:523.0px;top:365.1px;width:54.7px;height:16.0px;background:#ffffe6;border-top:1px solid #a0a0a0;border-left:1px solid #a0a0a0;box-sizing:border-box;"></div>
<div class="t" style="left:-24.3px;width:600px;text-align:right;top:366.5px;font-size:14px;font-weight:bold;color:#000;">21,8</div>
<div class="r" style="left:583.3px;top:365.1px;width:256.4px;height:16.0px;background:#c0c0c0;border:1px solid #e8e8e8;box-sizing:border-box;"></div>
<div class="r" style="left:584.3px;top:366.1px;width:92.7px;height:14.0px;background:#0000ff;"></div>
<svg style="left:583.3px;top:365.12px" width="256.4000000000001" height="16"><line x1="27.3" y1="2" x2="27.3" y2="14" stroke="#111" stroke-width="1.2" stroke-dasharray="2.5 2.5"/><line x1="52.9" y1="2" x2="52.9" y2="14" stroke="#111" stroke-width="1.2" stroke-dasharray="2.5 2.5"/><line x1="78.5" y1="2" x2="78.5" y2="14" stroke="#111" stroke-width="1.2" stroke-dasharray="2.5 2.5"/><line x1="104.1" y1="2" x2="104.1" y2="14" stroke="#111" stroke-width="1.2" stroke-dasharray="2.5 2.5"/><line x1="129.7" y1="2" x2="129.7" y2="14" stroke="#111" stroke-width="1.3"/><line x1="155.3" y1="2" x2="155.3" y2="14" stroke="#111" stroke-width="1.2" stroke-dasharray="2.5 2.5"/><line x1="180.9" y1="2" x2="180.9" y2="14" stroke="#111" stroke-width="1.2" stroke-dasharray="2.5 2.5"/><line x1="206.5" y1="2" x2="206.5" y2="14" stroke="#111" stroke-width="1.2" stroke-dasharray="2.5 2.5"/><line x1="232.1" y1="2" x2="232.1" y2="14" stroke="#111" stroke-width="1.2" stroke-dasharray="2.5 2.5"/></svg>
<div class="t" style="left:-82.0px;width:600px;text-align:right;top:386.2px;font-size:12.3px;color:#000;">Ємн.4</div>
<div class="r" style="left:523.0px;top:383.7px;width:54.7px;height:16.0px;background:#ffffe6;border-top:1px solid #a0a0a0;border-left:1px solid #a0a0a0;box-sizing:border-box;"></div>
<div class="t" style="left:-24.3px;width:600px;text-align:right;top:385.0px;font-size:14px;font-weight:bold;color:#000;">53,2</div>
<div class="r" style="left:583.3px;top:383.7px;width:256.4px;height:16.0px;background:#c0c0c0;border:1px solid #e8e8e8;box-sizing:border-box;"></div>
<div class="r" style="left:584.3px;top:384.7px;width:226.7px;height:14.0px;background:#0000ff;"></div>
<svg style="left:583.3px;top:383.68px" width="256.4000000000001" height="16"><line x1="27.3" y1="2" x2="27.3" y2="14" stroke="#111" stroke-width="1.2" stroke-dasharray="2.5 2.5"/><line x1="52.9" y1="2" x2="52.9" y2="14" stroke="#111" stroke-width="1.2" stroke-dasharray="2.5 2.5"/><line x1="78.5" y1="2" x2="78.5" y2="14" stroke="#111" stroke-width="1.2" stroke-dasharray="2.5 2.5"/><line x1="104.1" y1="2" x2="104.1" y2="14" stroke="#111" stroke-width="1.2" stroke-dasharray="2.5 2.5"/><line x1="129.7" y1="2" x2="129.7" y2="14" stroke="#111" stroke-width="1.3"/><line x1="155.3" y1="2" x2="155.3" y2="14" stroke="#111" stroke-width="1.2" stroke-dasharray="2.5 2.5"/><line x1="180.9" y1="2" x2="180.9" y2="14" stroke="#111" stroke-width="1.2" stroke-dasharray="2.5 2.5"/><line x1="206.5" y1="2" x2="206.5" y2="14" stroke="#111" stroke-width="1.2" stroke-dasharray="2.5 2.5"/><line x1="232.1" y1="2" x2="232.1" y2="14" stroke="#111" stroke-width="1.2" stroke-dasharray="2.5 2.5"/></svg>
<div class="t" style="left:-82.0px;width:600px;text-align:right;top:404.7px;font-size:12.3px;color:#000;">Ємн.5</div>
<div class="r" style="left:523.0px;top:402.2px;width:54.7px;height:16.0px;background:#ffffe6;border-top:1px solid #a0a0a0;border-left:1px solid #a0a0a0;box-sizing:border-box;"></div>
<div class="t" style="left:-24.3px;width:600px;text-align:right;top:403.6px;font-size:14px;font-weight:bold;color:#000;">0,0</div>
<div class="r" style="left:583.3px;top:402.2px;width:256.4px;height:16.0px;background:#c0c0c0;border:1px solid #e8e8e8;box-sizing:border-box;"></div>
<svg style="left:583.3px;top:402.24px" width="256.4000000000001" height="16"><line x1="1.5" y1="2" x2="1.5" y2="14" stroke="#111" stroke-width="1.2"/><line x1="27.3" y1="2" x2="27.3" y2="14" stroke="#111" stroke-width="1.2" stroke-dasharray="2.5 2.5"/><line x1="52.9" y1="2" x2="52.9" y2="14" stroke="#111" stroke-width="1.2" stroke-dasharray="2.5 2.5"/><line x1="78.5" y1="2" x2="78.5" y2="14" stroke="#111" stroke-width="1.2" stroke-dasharray="2.5 2.5"/><line x1="104.1" y1="2" x2="104.1" y2="14" stroke="#111" stroke-width="1.2" stroke-dasharray="2.5 2.5"/><line x1="129.7" y1="2" x2="129.7" y2="14" stroke="#111" stroke-width="1.3"/><line x1="155.3" y1="2" x2="155.3" y2="14" stroke="#111" stroke-width="1.2" stroke-dasharray="2.5 2.5"/><line x1="180.9" y1="2" x2="180.9" y2="14" stroke="#111" stroke-width="1.2" stroke-dasharray="2.5 2.5"/><line x1="206.5" y1="2" x2="206.5" y2="14" stroke="#111" stroke-width="1.2" stroke-dasharray="2.5 2.5"/><line x1="232.1" y1="2" x2="232.1" y2="14" stroke="#111" stroke-width="1.2" stroke-dasharray="2.5 2.5"/></svg>
<div class="t" style="left:-82.0px;width:600px;text-align:right;top:423.3px;font-size:12.3px;color:#000;">Ємн.6</div>
<div class="r" style="left:523.0px;top:420.8px;width:54.7px;height:16.0px;background:#ffffe6;border-top:1px solid #a0a0a0;border-left:1px solid #a0a0a0;box-sizing:border-box;"></div>
<div class="t" style="left:-24.3px;width:600px;text-align:right;top:422.1px;font-size:14px;font-weight:bold;color:#000;">???</div>
<div class="r" style="left:583.3px;top:420.8px;width:256.4px;height:16.0px;background:#c0c0c0;border:1px solid #e8e8e8;box-sizing:border-box;"></div>
<svg style="left:583.3px;top:420.8px" width="256.4000000000001" height="16"><line x1="1.5" y1="2" x2="1.5" y2="14" stroke="#111" stroke-width="1.2"/><line x1="27.3" y1="2" x2="27.3" y2="14" stroke="#111" stroke-width="1.2" stroke-dasharray="2.5 2.5"/><line x1="52.9" y1="2" x2="52.9" y2="14" stroke="#111" stroke-width="1.2" stroke-dasharray="2.5 2.5"/><line x1="78.5" y1="2" x2="78.5" y2="14" stroke="#111" stroke-width="1.2" stroke-dasharray="2.5 2.5"/><line x1="104.1" y1="2" x2="104.1" y2="14" stroke="#111" stroke-width="1.2" stroke-dasharray="2.5 2.5"/><line x1="129.7" y1="2" x2="129.7" y2="14" stroke="#111" stroke-width="1.3"/><line x1="155.3" y1="2" x2="155.3" y2="14" stroke="#111" stroke-width="1.2" stroke-dasharray="2.5 2.5"/><line x1="180.9" y1="2" x2="180.9" y2="14" stroke="#111" stroke-width="1.2" stroke-dasharray="2.5 2.5"/><line x1="206.5" y1="2" x2="206.5" y2="14" stroke="#111" stroke-width="1.2" stroke-dasharray="2.5 2.5"/><line x1="232.1" y1="2" x2="232.1" y2="14" stroke="#111" stroke-width="1.2" stroke-dasharray="2.5 2.5"/></svg>
<div class="t" style="left:-82.0px;width:600px;text-align:right;top:441.8px;font-size:12.3px;color:#000;">Ємн.7</div>
<div class="r" style="left:523.0px;top:439.4px;width:54.7px;height:16.0px;background:#ffffe6;border-top:1px solid #a0a0a0;border-left:1px solid #a0a0a0;box-sizing:border-box;"></div>
<div class="t" style="left:-24.3px;width:600px;text-align:right;top:440.7px;font-size:14px;font-weight:bold;color:#000;">???</div>
<div class="r" style="left:583.3px;top:439.4px;width:256.4px;height:16.0px;background:#c0c0c0;border:1px solid #e8e8e8;box-sizing:border-box;"></div>
<svg style="left:583.3px;top:439.36px" width="256.4000000000001" height="16"><line x1="1.5" y1="2" x2="1.5" y2="14" stroke="#111" stroke-width="1.2"/><line x1="27.3" y1="2" x2="27.3" y2="14" stroke="#111" stroke-width="1.2" stroke-dasharray="2.5 2.5"/><line x1="52.9" y1="2" x2="52.9" y2="14" stroke="#111" stroke-width="1.2" stroke-dasharray="2.5 2.5"/><line x1="78.5" y1="2" x2="78.5" y2="14" stroke="#111" stroke-width="1.2" stroke-dasharray="2.5 2.5"/><line x1="104.1" y1="2" x2="104.1" y2="14" stroke="#111" stroke-width="1.2" stroke-dasharray="2.5 2.5"/><line x1="129.7" y1="2" x2="129.7" y2="14" stroke="#111" stroke-width="1.3"/><line x1="155.3" y1="2" x2="155.3" y2="14" stroke="#111" stroke-width="1.2" stroke-dasharray="2.5 2.5"/><line x1="180.9" y1="2" x2="180.9" y2="14" stroke="#111" stroke-width="1.2" stroke-dasharray="2.5 2.5"/><line x1="206.5" y1="2" x2="206.5" y2="14" stroke="#111" stroke-width="1.2" stroke-dasharray="2.5 2.5"/><line x1="232.1" y1="2" x2="232.1" y2="14" stroke="#111" stroke-width="1.2" stroke-dasharray="2.5 2.5"/></svg>
<div class="t" style="left:-82.0px;width:600px;text-align:right;top:460.4px;font-size:12.3px;color:#000;">Ємн.8</div>
<div class="r" style="left:523.0px;top:457.9px;width:54.7px;height:16.0px;background:#ffffe6;border-top:1px solid #a0a0a0;border-left:1px solid #a0a0a0;box-sizing:border-box;"></div>
<div class="t" style="left:-24.3px;width:600px;text-align:right;top:459.3px;font-size:14px;font-weight:bold;color:#000;">???</div>
<div class="r" style="left:583.3px;top:457.9px;width:256.4px;height:16.0px;background:#c0c0c0;border:1px solid #e8e8e8;box-sizing:border-box;"></div>
<svg style="left:583.3px;top:457.91999999999996px" width="256.4000000000001" height="16"><line x1="1.5" y1="2" x2="1.5" y2="14" stroke="#111" stroke-width="1.2"/><line x1="27.3" y1="2" x2="27.3" y2="14" stroke="#111" stroke-width="1.2" stroke-dasharray="2.5 2.5"/><line x1="52.9" y1="2" x2="52.9" y2="14" stroke="#111" stroke-width="1.2" stroke-dasharray="2.5 2.5"/><line x1="78.5" y1="2" x2="78.5" y2="14" stroke="#111" stroke-width="1.2" stroke-dasharray="2.5 2.5"/><line x1="104.1" y1="2" x2="104.1" y2="14" stroke="#111" stroke-width="1.2" stroke-dasharray="2.5 2.5"/><line x1="129.7" y1="2" x2="129.7" y2="14" stroke="#111" stroke-width="1.3"/><line x1="155.3" y1="2" x2="155.3" y2="14" stroke="#111" stroke-width="1.2" stroke-dasharray="2.5 2.5"/><line x1="180.9" y1="2" x2="180.9" y2="14" stroke="#111" stroke-width="1.2" stroke-dasharray="2.5 2.5"/><line x1="206.5" y1="2" x2="206.5" y2="14" stroke="#111" stroke-width="1.2" stroke-dasharray="2.5 2.5"/><line x1="232.1" y1="2" x2="232.1" y2="14" stroke="#111" stroke-width="1.2" stroke-dasharray="2.5 2.5"/></svg>
<div class="t" style="left:-82.0px;width:600px;text-align:right;top:479.0px;font-size:12.3px;color:#000;">Кубова</div>
<div class="r" style="left:523.0px;top:476.5px;width:54.7px;height:16.0px;background:#ffffe6;border-top:1px solid #a0a0a0;border-left:1px solid #a0a0a0;box-sizing:border-box;"></div>
<div class="t" style="left:-24.3px;width:600px;text-align:right;top:477.8px;font-size:14px;font-weight:bold;color:#000;">12,5</div>
<div class="r" style="left:583.3px;top:476.5px;width:256.4px;height:16.0px;background:#c0c0c0;border:1px solid #e8e8e8;box-sizing:border-box;"></div>
<div class="r" style="left:584.3px;top:477.5px;width:53.7px;height:14.0px;background:#0000ff;"></div>
<svg style="left:583.3px;top:476.48px" width="256.4000000000001" height="16"><line x1="27.3" y1="2" x2="27.3" y2="14" stroke="#111" stroke-width="1.2" stroke-dasharray="2.5 2.5"/><line x1="52.9" y1="2" x2="52.9" y2="14" stroke="#111" stroke-width="1.2" stroke-dasharray="2.5 2.5"/><line x1="78.5" y1="2" x2="78.5" y2="14" stroke="#111" stroke-width="1.2" stroke-dasharray="2.5 2.5"/><line x1="104.1" y1="2" x2="104.1" y2="14" stroke="#111" stroke-width="1.2" stroke-dasharray="2.5 2.5"/><line x1="129.7" y1="2" x2="129.7" y2="14" stroke="#111" stroke-width="1.3"/><line x1="155.3" y1="2" x2="155.3" y2="14" stroke="#111" stroke-width="1.2" stroke-dasharray="2.5 2.5"/><line x1="180.9" y1="2" x2="180.9" y2="14" stroke="#111" stroke-width="1.2" stroke-dasharray="2.5 2.5"/><line x1="206.5" y1="2" x2="206.5" y2="14" stroke="#111" stroke-width="1.2" stroke-dasharray="2.5 2.5"/><line x1="232.1" y1="2" x2="232.1" y2="14" stroke="#111" stroke-width="1.2" stroke-dasharray="2.5 2.5"/></svg>
<div class="t" style="left:480.0px;top:499.1px;font-size:12.3px;color:#000;">Загальн. об`єм  Активних</div>
<div class="r" style="left:629.5px;top:496.0px;width:65.9px;height:17.0px;background:#fff;border-top:1px solid #a0a0a0;border-left:1px solid #a0a0a0;box-sizing:border-box;"></div>
<div class="t" style="left:93.4px;width:600px;text-align:right;top:497.3px;font-size:14px;font-weight:bold;color:#000;">164</div>
<div class="t" style="left:708.8px;top:499.1px;font-size:12.3px;color:#000;">Пас.</div>
<div class="r" style="left:738.8px;top:496.0px;width:65.2px;height:17.0px;background:#c0c0c0;border-top:1px solid #a0a0a0;border-left:1px solid #a0a0a0;box-sizing:border-box;"></div>
<div class="t" style="left:202.0px;width:600px;text-align:right;top:497.3px;font-size:14px;font-weight:bold;color:#000;">14</div>
<div class="t" style="left:807.4px;top:499.1px;font-size:12.3px;color:#000;">м3</div>
<div class="r" style="left:465.0px;top:516.0px;width:381.0px;height:1.0px;background:#a0a0a0;"></div>
<div class="r" style="left:465.0px;top:517.0px;width:381.0px;height:1.0px;background:#fff;"></div>
<div class="r" style="left:469.0px;top:521.5px;width:376.0px;height:15.5px;background:#004189;"></div>
<div class="t" style="left:357.0px;width:600px;text-align:center;top:522.5px;font-size:14px;font-weight:bold;color:#f4f8ff;letter-spacing:1.6px;transform:scaleX(0.86);">ГАЗОВІ КОМПОНЕНТИ</div>
<div class="t" style="left:259.0px;width:600px;text-align:center;top:540.3px;font-size:12.3px;color:#000;">ppm</div>
<div class="t" style="left:321.4px;width:600px;text-align:center;top:540.3px;font-size:12.3px;color:#000;">%</div>
<div class="t" style="left:-87.0px;width:600px;text-align:right;top:556.5px;font-size:12.3px;color:#000;">C1</div>
<div class="r" style="left:517.8px;top:554.0px;width:76.0px;height:16.0px;background:#fff;border-top:1px solid #a0a0a0;border-left:1px solid #a0a0a0;box-sizing:border-box;"></div>
<div class="t" style="left:-8.2px;width:600px;text-align:right;top:555.3px;font-size:14px;font-weight:bold;color:#000;">569,0000</div>
<div class="r" style="left:599.0px;top:554.0px;width:43.5px;height:16.0px;background:#c0c0c0;border-top:1px solid #a0a0a0;border-left:1px solid #a0a0a0;box-sizing:border-box;"></div>
<div class="t" style="left:40.5px;width:600px;text-align:right;top:555.3px;font-size:14px;font-weight:bold;color:#000;">89,5</div>
<div class="r" style="left:645.8px;top:554.0px;width:194.2px;height:16.0px;background:#c0c0c0;border:1px solid #e8e8e8;box-sizing:border-box;"></div>
<div class="r" style="left:646.8px;top:555.0px;width:173.7px;height:14.0px;background:#ffff00;"></div>
<svg style="left:645.8px;top:554.0px" width="194.20000000000005" height="16"><line x1="1.5" y1="2" x2="1.5" y2="14" stroke="#111" stroke-width="1.2"/><line x1="21.1" y1="2" x2="21.1" y2="14" stroke="#111" stroke-width="1.2" stroke-dasharray="2.5 2.5"/><line x1="40.5" y1="2" x2="40.5" y2="14" stroke="#111" stroke-width="1.2" stroke-dasharray="2.5 2.5"/><line x1="59.9" y1="2" x2="59.9" y2="14" stroke="#111" stroke-width="1.2" stroke-dasharray="2.5 2.5"/><line x1="79.3" y1="2" x2="79.3" y2="14" stroke="#111" stroke-width="1.2" stroke-dasharray="2.5 2.5"/><line x1="98.7" y1="2" x2="98.7" y2="14" stroke="#111" stroke-width="1.3"/><line x1="118.0" y1="2" x2="118.0" y2="14" stroke="#111" stroke-width="1.2" stroke-dasharray="2.5 2.5"/><line x1="137.4" y1="2" x2="137.4" y2="14" stroke="#111" stroke-width="1.2" stroke-dasharray="2.5 2.5"/><line x1="156.8" y1="2" x2="156.8" y2="14" stroke="#111" stroke-width="1.2" stroke-dasharray="2.5 2.5"/><line x1="176.2" y1="2" x2="176.2" y2="14" stroke="#111" stroke-width="1.2" stroke-dasharray="2.5 2.5"/></svg>
<div class="t" style="left:-87.0px;width:600px;text-align:right;top:575.0px;font-size:12.3px;color:#000;">C2</div>
<div class="r" style="left:517.8px;top:572.5px;width:76.0px;height:16.0px;background:#fff;border-top:1px solid #a0a0a0;border-left:1px solid #a0a0a0;box-sizing:border-box;"></div>
<div class="t" style="left:-8.2px;width:600px;text-align:right;top:573.8px;font-size:14px;font-weight:bold;color:#000;">0,0000</div>
<div class="r" style="left:599.0px;top:572.5px;width:43.5px;height:16.0px;background:#c0c0c0;border-top:1px solid #a0a0a0;border-left:1px solid #a0a0a0;box-sizing:border-box;"></div>
<div class="t" style="left:40.5px;width:600px;text-align:right;top:573.8px;font-size:14px;font-weight:bold;color:#000;">0,0</div>
<div class="r" style="left:645.8px;top:572.5px;width:194.2px;height:16.0px;background:#c0c0c0;border:1px solid #e8e8e8;box-sizing:border-box;"></div>
<svg style="left:645.8px;top:572.5px" width="194.20000000000005" height="16"><line x1="1.5" y1="2" x2="1.5" y2="14" stroke="#111" stroke-width="1.2"/><line x1="21.1" y1="2" x2="21.1" y2="14" stroke="#111" stroke-width="1.2" stroke-dasharray="2.5 2.5"/><line x1="40.5" y1="2" x2="40.5" y2="14" stroke="#111" stroke-width="1.2" stroke-dasharray="2.5 2.5"/><line x1="59.9" y1="2" x2="59.9" y2="14" stroke="#111" stroke-width="1.2" stroke-dasharray="2.5 2.5"/><line x1="79.3" y1="2" x2="79.3" y2="14" stroke="#111" stroke-width="1.2" stroke-dasharray="2.5 2.5"/><line x1="98.7" y1="2" x2="98.7" y2="14" stroke="#111" stroke-width="1.3"/><line x1="118.0" y1="2" x2="118.0" y2="14" stroke="#111" stroke-width="1.2" stroke-dasharray="2.5 2.5"/><line x1="137.4" y1="2" x2="137.4" y2="14" stroke="#111" stroke-width="1.2" stroke-dasharray="2.5 2.5"/><line x1="156.8" y1="2" x2="156.8" y2="14" stroke="#111" stroke-width="1.2" stroke-dasharray="2.5 2.5"/><line x1="176.2" y1="2" x2="176.2" y2="14" stroke="#111" stroke-width="1.2" stroke-dasharray="2.5 2.5"/></svg>
<div class="t" style="left:-87.0px;width:600px;text-align:right;top:593.5px;font-size:12.3px;color:#000;">C3</div>
<div class="r" style="left:517.8px;top:591.0px;width:76.0px;height:16.0px;background:#fff;border-top:1px solid #a0a0a0;border-left:1px solid #a0a0a0;box-sizing:border-box;"></div>
<div class="t" style="left:-8.2px;width:600px;text-align:right;top:592.3px;font-size:14px;font-weight:bold;color:#000;">19,0000</div>
<div class="r" style="left:599.0px;top:591.0px;width:43.5px;height:16.0px;background:#c0c0c0;border-top:1px solid #a0a0a0;border-left:1px solid #a0a0a0;box-sizing:border-box;"></div>
<div class="t" style="left:40.5px;width:600px;text-align:right;top:592.3px;font-size:14px;font-weight:bold;color:#000;">3,0</div>
<div class="r" style="left:645.8px;top:591.0px;width:194.2px;height:16.0px;background:#c0c0c0;border:1px solid #e8e8e8;box-sizing:border-box;"></div>
<div class="r" style="left:646.8px;top:592.0px;width:6.2px;height:14.0px;background:#ffff00;"></div>
<svg style="left:645.8px;top:591.0px" width="194.20000000000005" height="16"><line x1="1.5" y1="2" x2="1.5" y2="14" stroke="#111" stroke-width="1.2"/><line x1="21.1" y1="2" x2="21.1" y2="14" stroke="#111" stroke-width="1.2" stroke-dasharray="2.5 2.5"/><line x1="40.5" y1="2" x2="40.5" y2="14" stroke="#111" stroke-width="1.2" stroke-dasharray="2.5 2.5"/><line x1="59.9" y1="2" x2="59.9" y2="14" stroke="#111" stroke-width="1.2" stroke-dasharray="2.5 2.5"/><line x1="79.3" y1="2" x2="79.3" y2="14" stroke="#111" stroke-width="1.2" stroke-dasharray="2.5 2.5"/><line x1="98.7" y1="2" x2="98.7" y2="14" stroke="#111" stroke-width="1.3"/><line x1="118.0" y1="2" x2="118.0" y2="14" stroke="#111" stroke-width="1.2" stroke-dasharray="2.5 2.5"/><line x1="137.4" y1="2" x2="137.4" y2="14" stroke="#111" stroke-width="1.2" stroke-dasharray="2.5 2.5"/><line x1="156.8" y1="2" x2="156.8" y2="14" stroke="#111" stroke-width="1.2" stroke-dasharray="2.5 2.5"/><line x1="176.2" y1="2" x2="176.2" y2="14" stroke="#111" stroke-width="1.2" stroke-dasharray="2.5 2.5"/></svg>
<div class="t" style="left:-87.0px;width:600px;text-align:right;top:612.0px;font-size:12.3px;color:#000;">C4</div>
<div class="r" style="left:517.8px;top:609.5px;width:76.0px;height:16.0px;background:#fff;border-top:1px solid #a0a0a0;border-left:1px solid #a0a0a0;box-sizing:border-box;"></div>
<div class="t" style="left:-8.2px;width:600px;text-align:right;top:610.8px;font-size:14px;font-weight:bold;color:#000;">0,0000</div>
<div class="r" style="left:599.0px;top:609.5px;width:43.5px;height:16.0px;background:#c0c0c0;border-top:1px solid #a0a0a0;border-left:1px solid #a0a0a0;box-sizing:border-box;"></div>
<div class="t" style="left:40.5px;width:600px;text-align:right;top:610.8px;font-size:14px;font-weight:bold;color:#000;">0,0</div>
<div class="r" style="left:645.8px;top:609.5px;width:194.2px;height:16.0px;background:#c0c0c0;border:1px solid #e8e8e8;box-sizing:border-box;"></div>
<svg style="left:645.8px;top:609.5px" width="194.20000000000005" height="16"><line x1="1.5" y1="2" x2="1.5" y2="14" stroke="#111" stroke-width="1.2"/><line x1="21.1" y1="2" x2="21.1" y2="14" stroke="#111" stroke-width="1.2" stroke-dasharray="2.5 2.5"/><line x1="40.5" y1="2" x2="40.5" y2="14" stroke="#111" stroke-width="1.2" stroke-dasharray="2.5 2.5"/><line x1="59.9" y1="2" x2="59.9" y2="14" stroke="#111" stroke-width="1.2" stroke-dasharray="2.5 2.5"/><line x1="79.3" y1="2" x2="79.3" y2="14" stroke="#111" stroke-width="1.2" stroke-dasharray="2.5 2.5"/><line x1="98.7" y1="2" x2="98.7" y2="14" stroke="#111" stroke-width="1.3"/><line x1="118.0" y1="2" x2="118.0" y2="14" stroke="#111" stroke-width="1.2" stroke-dasharray="2.5 2.5"/><line x1="137.4" y1="2" x2="137.4" y2="14" stroke="#111" stroke-width="1.2" stroke-dasharray="2.5 2.5"/><line x1="156.8" y1="2" x2="156.8" y2="14" stroke="#111" stroke-width="1.2" stroke-dasharray="2.5 2.5"/><line x1="176.2" y1="2" x2="176.2" y2="14" stroke="#111" stroke-width="1.2" stroke-dasharray="2.5 2.5"/></svg>
<div class="t" style="left:-87.0px;width:600px;text-align:right;top:630.5px;font-size:12.3px;color:#000;">C5</div>
<div class="r" style="left:517.8px;top:628.0px;width:76.0px;height:16.0px;background:#fff;border-top:1px solid #a0a0a0;border-left:1px solid #a0a0a0;box-sizing:border-box;"></div>
<div class="t" style="left:-8.2px;width:600px;text-align:right;top:629.3px;font-size:14px;font-weight:bold;color:#000;">48,0000</div>
<div class="r" style="left:599.0px;top:628.0px;width:43.5px;height:16.0px;background:#c0c0c0;border-top:1px solid #a0a0a0;border-left:1px solid #a0a0a0;box-sizing:border-box;"></div>
<div class="t" style="left:40.5px;width:600px;text-align:right;top:629.3px;font-size:14px;font-weight:bold;color:#000;">7,5</div>
<div class="r" style="left:645.8px;top:628.0px;width:194.2px;height:16.0px;background:#c0c0c0;border:1px solid #e8e8e8;box-sizing:border-box;"></div>
<div class="r" style="left:646.8px;top:629.0px;width:15.2px;height:14.0px;background:#ffff00;"></div>
<svg style="left:645.8px;top:628.0px" width="194.20000000000005" height="16"><line x1="1.5" y1="2" x2="1.5" y2="14" stroke="#111" stroke-width="1.2"/><line x1="21.1" y1="2" x2="21.1" y2="14" stroke="#111" stroke-width="1.2" stroke-dasharray="2.5 2.5"/><line x1="40.5" y1="2" x2="40.5" y2="14" stroke="#111" stroke-width="1.2" stroke-dasharray="2.5 2.5"/><line x1="59.9" y1="2" x2="59.9" y2="14" stroke="#111" stroke-width="1.2" stroke-dasharray="2.5 2.5"/><line x1="79.3" y1="2" x2="79.3" y2="14" stroke="#111" stroke-width="1.2" stroke-dasharray="2.5 2.5"/><line x1="98.7" y1="2" x2="98.7" y2="14" stroke="#111" stroke-width="1.3"/><line x1="118.0" y1="2" x2="118.0" y2="14" stroke="#111" stroke-width="1.2" stroke-dasharray="2.5 2.5"/><line x1="137.4" y1="2" x2="137.4" y2="14" stroke="#111" stroke-width="1.2" stroke-dasharray="2.5 2.5"/><line x1="156.8" y1="2" x2="156.8" y2="14" stroke="#111" stroke-width="1.2" stroke-dasharray="2.5 2.5"/><line x1="176.2" y1="2" x2="176.2" y2="14" stroke="#111" stroke-width="1.2" stroke-dasharray="2.5 2.5"/></svg>
<div class="t" style="left:-87.0px;width:600px;text-align:right;top:649.0px;font-size:12.3px;color:#000;">C6</div>
<div class="r" style="left:517.8px;top:646.5px;width:76.0px;height:16.0px;background:#fff;border-top:1px solid #a0a0a0;border-left:1px solid #a0a0a0;box-sizing:border-box;"></div>
<div class="t" style="left:-8.2px;width:600px;text-align:right;top:647.8px;font-size:14px;font-weight:bold;color:#000;">???</div>
<div class="r" style="left:599.0px;top:646.5px;width:43.5px;height:16.0px;background:#c0c0c0;border-top:1px solid #a0a0a0;border-left:1px solid #a0a0a0;box-sizing:border-box;"></div>
<div class="t" style="left:40.5px;width:600px;text-align:right;top:647.8px;font-size:14px;font-weight:bold;color:#000;">???</div>
<div class="r" style="left:645.8px;top:646.5px;width:194.2px;height:16.0px;background:#c0c0c0;border:1px solid #e8e8e8;box-sizing:border-box;"></div>
<svg style="left:645.8px;top:646.5px" width="194.20000000000005" height="16"><line x1="1.5" y1="2" x2="1.5" y2="14" stroke="#111" stroke-width="1.2"/><line x1="21.1" y1="2" x2="21.1" y2="14" stroke="#111" stroke-width="1.2" stroke-dasharray="2.5 2.5"/><line x1="40.5" y1="2" x2="40.5" y2="14" stroke="#111" stroke-width="1.2" stroke-dasharray="2.5 2.5"/><line x1="59.9" y1="2" x2="59.9" y2="14" stroke="#111" stroke-width="1.2" stroke-dasharray="2.5 2.5"/><line x1="79.3" y1="2" x2="79.3" y2="14" stroke="#111" stroke-width="1.2" stroke-dasharray="2.5 2.5"/><line x1="98.7" y1="2" x2="98.7" y2="14" stroke="#111" stroke-width="1.3"/><line x1="118.0" y1="2" x2="118.0" y2="14" stroke="#111" stroke-width="1.2" stroke-dasharray="2.5 2.5"/><line x1="137.4" y1="2" x2="137.4" y2="14" stroke="#111" stroke-width="1.2" stroke-dasharray="2.5 2.5"/><line x1="156.8" y1="2" x2="156.8" y2="14" stroke="#111" stroke-width="1.2" stroke-dasharray="2.5 2.5"/><line x1="176.2" y1="2" x2="176.2" y2="14" stroke="#111" stroke-width="1.2" stroke-dasharray="2.5 2.5"/></svg>
<div class="t" style="left:474.6px;top:668.5px;font-size:12.3px;color:#000;">C1...C6</div>
<div class="r" style="left:517.8px;top:666.0px;width:76.0px;height:16.0px;background:#fff;border-top:1px solid #a0a0a0;border-left:1px solid #a0a0a0;box-sizing:border-box;"></div>
<div class="t" style="left:-8.2px;width:600px;text-align:right;top:667.3px;font-size:14px;font-weight:bold;color:#000;">636</div>
<div class="t" style="left:600.3px;top:668.5px;font-size:12.3px;color:#000;">ppmЗАГАЛЬНИЙ ГАЗ</div>
<div class="r" style="left:725.7px;top:666.0px;width:78.6px;height:16.0px;background:#fff;border-top:1px solid #a0a0a0;border-left:1px solid #a0a0a0;box-sizing:border-box;"></div>
<div class="t" style="left:202.3px;width:600px;text-align:right;top:667.3px;font-size:14px;font-weight:bold;color:#000;">0,10</div>
<div class="t" style="left:806.0px;top:668.5px;font-size:12.3px;color:#000;">%</div>
<div class="r" style="left:465.0px;top:685.3px;width:381.0px;height:1.0px;background:#a0a0a0;"></div>
<div class="r" style="left:465.0px;top:686.3px;width:381.0px;height:1.0px;background:#fff;"></div>
<div class="r" style="left:469.0px;top:690.4px;width:376.0px;height:14.6px;background:#004189;"></div>
<div class="t" style="left:357.0px;width:600px;text-align:center;top:690.5px;font-size:14px;font-weight:bold;color:#f4f8ff;letter-spacing:1.6px;transform:scaleX(0.86);">ДАНІ ПО РЕЙСУ</div>
<div class="t" style="left:247.7px;width:600px;text-align:center;top:709.2px;font-size:12.3px;color:#000;">Номер рейсу</div>
<div class="r" style="left:502.2px;top:725.5px;width:88.4px;height:29.2px;background:#80ff80;border-top:1px solid #a0a0a0;border-left:1px solid #a0a0a0;box-sizing:border-box;"></div>
<div class="t" style="left:246.8px;width:600px;text-align:center;top:726.0px;font-size:29px;font-weight:bold;color:#000;transform:scaleX(0.85);">2</div>
<div class="r" style="left:629.0px;top:706.0px;width:1.0px;height:51.0px;background:#a0a0a0;"></div>
<div class="r" style="left:630.0px;top:706.0px;width:1.0px;height:51.0px;background:#fff;"></div>
<div class="r" style="left:631px;top:705px;width:215px;height:52px;overflow:hidden;">
<div class="t" style="left:-209.60000000000002px;width:300px;text-align:right;top:7.4px;font-size:12.3px;color:#000">Обор. долота</div>
<div class="r" style="left:94.70000000000005px;top:4.899999999999977px;width:87.69999999999993px;height:16px;background:#fff;border-top:1px solid #a0a0a0;border-left:1px solid #a0a0a0;box-sizing:border-box;"></div>
<div class="t" style="left:-119.60000000000002px;width:300px;text-align:right;top:6.2px;font-size:14px;font-weight:bold;color:#000">10647</div>
<div class="t" style="left:186.29999999999995px;top:7.4px;font-size:12.3px;color:#000">об</div>
<div class="t" style="left:-209.60000000000002px;width:300px;text-align:right;top:26.2px;font-size:12.3px;color:#000">Ходів насоса</div>
<div class="r" style="left:94.70000000000005px;top:23.699999999999932px;width:87.69999999999993px;height:16px;background:#fff;border-top:1px solid #a0a0a0;border-left:1px solid #a0a0a0;box-sizing:border-box;"></div>
<div class="t" style="left:-119.60000000000002px;width:300px;text-align:right;top:25.0px;font-size:14px;font-weight:bold;color:#000">15235</div>
<div class="t" style="left:186.29999999999995px;top:26.2px;font-size:12.3px;color:#000">ход</div>
<div class="t" style="left:-209.60000000000002px;width:300px;text-align:right;top:45.0px;font-size:12.3px;color:#000">Ходи насоса 1</div>
<div class="r" style="left:94.70000000000005px;top:42.5px;width:87.69999999999993px;height:16px;background:#fff;border-top:1px solid #a0a0a0;border-left:1px solid #a0a0a0;box-sizing:border-box;"></div>
<div class="t" style="left:-119.60000000000002px;width:300px;text-align:right;top:43.8px;font-size:14px;font-weight:bold;color:#000">7283</div>
<div class="t" style="left:186.29999999999995px;top:45.0px;font-size:12.3px;color:#000">ход</div>
</div>
<div class="t" style="left:831.0px;width:600px;text-align:center;top:135.0px;font-size:13px;font-weight:bold;color:#111;letter-spacing:0.7px;">Вага на гаку</div>
<div class="t" style="left:831.0px;width:600px;text-align:center;top:169.5px;font-size:13px;font-weight:bold;color:#111;letter-spacing:0.7px;">Тиск на вході</div>
<div class="r" style="left:850.5px;top:148.3px;width:560.0px;height:19.4px;background:#000;"></div>
<div class="r" style="left:850.5px;top:183.2px;width:560.0px;height:566.3px;background:#000;"></div>
<svg style="left:0px;top:0px" width="1432" height="785"><rect x="851" y="164.3" width="559.5" height="2.6" fill="#e6e41c"/><line x1="907" y1="161" x2="907" y2="167.5" stroke="#9a9a9a" stroke-width="1"/><line x1="963" y1="161" x2="963" y2="167.5" stroke="#9a9a9a" stroke-width="1"/><line x1="1019" y1="161" x2="1019" y2="167.5" stroke="#9a9a9a" stroke-width="1"/><line x1="1075" y1="161" x2="1075" y2="167.5" stroke="#9a9a9a" stroke-width="1"/><line x1="1131" y1="161" x2="1131" y2="167.5" stroke="#9a9a9a" stroke-width="1"/><line x1="1187" y1="161" x2="1187" y2="167.5" stroke="#9a9a9a" stroke-width="1"/><line x1="1243" y1="161" x2="1243" y2="167.5" stroke="#9a9a9a" stroke-width="1"/><line x1="1299" y1="161" x2="1299" y2="167.5" stroke="#9a9a9a" stroke-width="1"/><line x1="1355" y1="161" x2="1355" y2="167.5" stroke="#9a9a9a" stroke-width="1"/><path d="M1117 160.5 L1123 160.5 L1120 166 Z" fill="#fff"/><line x1="907" y1="196" x2="907" y2="749" stroke="#bdbdbd" stroke-width="1" stroke-dasharray="3.5 3"/><line x1="963" y1="196" x2="963" y2="749" stroke="#bdbdbd" stroke-width="1" stroke-dasharray="3.5 3"/><line x1="1019" y1="196" x2="1019" y2="749" stroke="#bdbdbd" stroke-width="1" stroke-dasharray="3.5 3"/><line x1="1075" y1="196" x2="1075" y2="749" stroke="#bdbdbd" stroke-width="1" stroke-dasharray="3.5 3"/><line x1="1131" y1="196" x2="1131" y2="749" stroke="#9a9a9a" stroke-width="1"/><line x1="1187" y1="196" x2="1187" y2="749" stroke="#bdbdbd" stroke-width="1" stroke-dasharray="3.5 3"/><line x1="1243" y1="196" x2="1243" y2="749" stroke="#bdbdbd" stroke-width="1" stroke-dasharray="3.5 3"/><line x1="1299" y1="196" x2="1299" y2="749" stroke="#bdbdbd" stroke-width="1" stroke-dasharray="3.5 3"/><line x1="1355" y1="196" x2="1355" y2="749" stroke="#bdbdbd" stroke-width="1" stroke-dasharray="3.5 3"/><line x1="851" y1="214.8" x2="1410" y2="214.8" stroke="#bdbdbd" stroke-width="1" stroke-dasharray="3.5 3"/><line x1="851" y1="232.3" x2="1410" y2="232.3" stroke="#bdbdbd" stroke-width="1" stroke-dasharray="3.5 3"/><line x1="851" y1="249.9" x2="1410" y2="249.9" stroke="#bdbdbd" stroke-width="1" stroke-dasharray="3.5 3"/><line x1="851" y1="267.5" x2="1378" y2="267.5" stroke="#a8a8a8" stroke-width="1"/><line x1="851" y1="285.1" x2="1410" y2="285.1" stroke="#bdbdbd" stroke-width="1" stroke-dasharray="3.5 3"/><line x1="851" y1="302.7" x2="1410" y2="302.7" stroke="#bdbdbd" stroke-width="1" stroke-dasharray="3.5 3"/><line x1="851" y1="320.2" x2="1410" y2="320.2" stroke="#bdbdbd" stroke-width="1" stroke-dasharray="3.5 3"/><line x1="851" y1="337.8" x2="1410" y2="337.8" stroke="#bdbdbd" stroke-width="1" stroke-dasharray="3.5 3"/><line x1="851" y1="355.4" x2="1378" y2="355.4" stroke="#a8a8a8" stroke-width="1"/><line x1="851" y1="373.0" x2="1410" y2="373.0" stroke="#bdbdbd" stroke-width="1" stroke-dasharray="3.5 3"/><line x1="851" y1="390.6" x2="1410" y2="390.6" stroke="#bdbdbd" stroke-width="1" stroke-dasharray="3.5 3"/><line x1="851" y1="408.1" x2="1410" y2="408.1" stroke="#bdbdbd" stroke-width="1" stroke-dasharray="3.5 3"/><line x1="851" y1="425.7" x2="1410" y2="425.7" stroke="#bdbdbd" stroke-width="1" stroke-dasharray="3.5 3"/><line x1="851" y1="443.3" x2="1378" y2="443.3" stroke="#a8a8a8" stroke-width="1"/><line x1="851" y1="460.9" x2="1410" y2="460.9" stroke="#bdbdbd" stroke-width="1" stroke-dasharray="3.5 3"/><line x1="851" y1="478.5" x2="1410" y2="478.5" stroke="#bdbdbd" stroke-width="1" stroke-dasharray="3.5 3"/><line x1="851" y1="496.0" x2="1410" y2="496.0" stroke="#bdbdbd" stroke-width="1" stroke-dasharray="3.5 3"/><line x1="851" y1="513.6" x2="1410" y2="513.6" stroke="#bdbdbd" stroke-width="1" stroke-dasharray="3.5 3"/><line x1="851" y1="531.2" x2="1378" y2="531.2" stroke="#a8a8a8" stroke-width="1"/><line x1="851" y1="548.8" x2="1410" y2="548.8" stroke="#bdbdbd" stroke-width="1" stroke-dasharray="3.5 3"/><line x1="851" y1="566.4" x2="1410" y2="566.4" stroke="#bdbdbd" stroke-width="1" stroke-dasharray="3.5 3"/><line x1="851" y1="583.9" x2="1410" y2="583.9" stroke="#bdbdbd" stroke-width="1" stroke-dasharray="3.5 3"/><line x1="851" y1="601.5" x2="1410" y2="601.5" stroke="#bdbdbd" stroke-width="1" stroke-dasharray="3.5 3"/><line x1="851" y1="619.1" x2="1378" y2="619.1" stroke="#a8a8a8" stroke-width="1"/><line x1="851" y1="636.7" x2="1410" y2="636.7" stroke="#bdbdbd" stroke-width="1" stroke-dasharray="3.5 3"/><line x1="851" y1="654.3" x2="1410" y2="654.3" stroke="#bdbdbd" stroke-width="1" stroke-dasharray="3.5 3"/><line x1="851" y1="671.8" x2="1410" y2="671.8" stroke="#bdbdbd" stroke-width="1" stroke-dasharray="3.5 3"/><line x1="851" y1="689.4" x2="1410" y2="689.4" stroke="#bdbdbd" stroke-width="1" stroke-dasharray="3.5 3"/><line x1="851" y1="707.0" x2="1378" y2="707.0" stroke="#a8a8a8" stroke-width="1"/><line x1="851" y1="724.6" x2="1410" y2="724.6" stroke="#bdbdbd" stroke-width="1" stroke-dasharray="3.5 3"/><path d="M968 203.5H981M983 203.5H994M971 204.5H985M993 204.5H994M962 205.5H967M970 205.5H998M963 206.5H965M968 206.5H996M964 207.5H995M966 208.5H1009M1011 208.5H1009M966 209.5H1003M958 210.5H1007M957 211.5H1007M966 212.5H1003M964 213.5H992M970 214.5H1017M952 215.5H964M967 215.5H1002M970 216.5H1000M962 217.5H1002M961 218.5H1001M975 219.5H978M980 219.5H993M967 220.5H976M979 220.5H992M963 221.5H972M979 221.5H998M968 222.5H983M991 222.5H995M969 223.5H1013M960 224.5H1024M967 225.5H976M980 225.5H999M942 226.5H1045M974 227.5H1026M964 228.5H1032M960 229.5H1015M958 230.5H991M998 230.5H994M955 231.5H956M964 231.5H1003M964 232.5H978M982 232.5H1022M969 233.5H1026M963 234.5H1005M974 235.5H990M996 235.5H1008M967 236.5H998M967 237.5H1010M965 238.5H1001M944 239.5H1006M969 240.5H971M977 240.5H999M961 241.5H1002M968 242.5H1038M969 243.5H995M969 244.5H1003M932 245.5H981M985 245.5H995M948 246.5H990M963 247.5H994M1000 247.5H996M960 248.5H976M984 248.5H989M959 249.5H963M967 249.5H980M950 250.5H959M961 250.5H985M951 251.5H988M944 252.5H992M936 253.5H942M944 253.5H985M952 254.5H1008M949 255.5H977M985 255.5H978M944 256.5H978M947 257.5H959M961 257.5H977M946 258.5H994M941 259.5H992M929 260.5H990M929 261.5H1005M940 262.5H977M934 263.5H996M935 264.5H977M981 264.5H992M943 265.5H1019M930 266.5H939M942 266.5H987M944 267.5H972M940 268.5H978M981 268.5H982M942 269.5H1028M942 270.5H976M942 271.5H984M989 271.5H988M947 272.5H955M962 272.5H971M935 273.5H998M915 274.5H978M936 275.5H954M959 275.5H1006M920 276.5H987M939 277.5H983M926 278.5H941M947 278.5H974M943 279.5H949M952 279.5H977M925 280.5H937M939 280.5H986M949 281.5H1002M943 282.5H975M978 282.5H976M937 283.5H978M915 284.5H978M942 285.5H1011M941 286.5H984M929 287.5H974M978 287.5H987M945 288.5H987M947 289.5H976M923 290.5H1008M937 291.5H977M942 292.5H957M961 292.5H985M937 293.5H978M945 294.5H989M950 295.5H976M979 295.5H1016M953 296.5H1006M933 297.5H1018M944 298.5H955M959 298.5H982M947 299.5H997M929 312.5H985M935 313.5H949M951 313.5H985M910 314.5H976M937 315.5H985M921 316.5H943M947 316.5H991M939 317.5H957M961 317.5H971M930 318.5H977M945 319.5H989M930 320.5H983M948 321.5H1000M937 322.5H994M934 323.5H955M958 323.5H1008M913 324.5H1008M933 325.5H954M957 325.5H990M939 326.5H962M965 326.5H973M940 327.5H971M945 328.5H957M964 328.5H983M941 329.5H1027M942 330.5H987M936 331.5H979M944 332.5H959M966 332.5H972M911 333.5H973M923 334.5H1005M942 335.5H995M942 336.5H964M971 336.5H972M936 337.5H981M939 338.5H980M941 339.5H975M942 340.5H971M940 341.5H976M942 342.5H1001M1009 342.5H1011M911 343.5H1017M930 344.5H985M989 344.5H992M922 345.5H969M947 346.5H982M938 347.5H981M933 348.5H988M933 349.5H986M927 350.5H982M938 351.5H971M933 352.5H933M938 352.5H980M938 353.5H973M938 354.5H966M935 355.5H978M912 356.5H978M937 357.5H963M971 357.5H985M936 358.5H953M957 358.5H989M918 359.5H992M932 360.5H944M951 360.5H969M927 361.5H977M909 362.5H931M934 362.5H992M924 363.5H976M982 363.5H981M924 364.5H987M930 365.5H972M975 365.5H976M934 366.5H954M959 366.5H962M932 367.5H991M915 368.5H921M923 368.5H968M914 369.5H920M927 369.5H976M936 370.5H966M929 371.5H949M954 371.5H978M931 372.5H980M983 372.5H990M907 373.5H964M937 374.5H969M933 375.5H962M968 375.5H970M932 376.5H991M993 376.5H998M930 377.5H959M964 377.5H993M927 378.5H970M933 379.5H955M962 379.5H981M931 380.5H940M944 380.5H968M938 381.5H980M983 381.5H982M914 382.5H974M937 383.5H982M931 384.5H972M923 385.5H967M910 386.5H982M934 387.5H985M929 388.5H976M926 389.5H972M975 389.5H1010M926 390.5H978M924 391.5H979M984 391.5H1005M932 392.5H960M926 393.5H955M963 393.5H965M931 394.5H962M927 395.5H1005M922 396.5H965M969 396.5H973M935 397.5H956M960 397.5H965M933 398.5H975M919 399.5H982M988 399.5H995M929 400.5H936M943 400.5H961M921 401.5H990M914 402.5H975M912 403.5H920M925 403.5H972M934 404.5H972M925 405.5H997M926 406.5H975M900 407.5H975M926 408.5H975M930 409.5H974M926 410.5H971M929 411.5H974M916 412.5H917M920 412.5H962M916 413.5H980M921 414.5H976M939 415.5H997M921 416.5H970M909 417.5H916M923 417.5H968M928 418.5H978M934 419.5H934M936 419.5H970M934 420.5H958M962 420.5H968M930 421.5H992M928 422.5H977M938 423.5H959M962 423.5H967M939 424.5H973M928 425.5H978M923 426.5H974M930 427.5H1004M932 428.5H979M943 429.5H975M927 430.5H968M975 430.5H975M934 431.5H982M990 431.5H998M933 432.5H972M929 433.5H976M931 434.5H940M946 434.5H980M936 435.5H971M930 436.5H952M954 436.5H972M925 437.5H981M915 438.5H929M932 438.5H986M925 439.5H1004M937 440.5H980M928 441.5H978M944 442.5H998M932 443.5H944M950 443.5H1011M934 444.5H945M948 444.5H979M944 445.5H971M940 446.5H997M920 447.5H984M929 448.5H960M966 448.5H973M935 449.5H973M940 450.5H972M929 451.5H938M943 451.5H977M923 452.5H982M986 452.5H1004M939 453.5H964M919 454.5H929M935 454.5H971M925 463.5H971M925 464.5H995M936 465.5H963M967 465.5H969M935 466.5H972M910 467.5H983M911 468.5H969M936 469.5H958M960 469.5H963M935 470.5H980M928 471.5H963M939 472.5H971M930 473.5H1011M928 474.5H945M949 474.5H998M903 475.5H956M963 475.5H1005M933 476.5H949M954 476.5H971M924 477.5H978M930 478.5H959M966 478.5H983M936 479.5H960M963 479.5H973M928 480.5H934M937 480.5H981M937 481.5H970M931 482.5H977M937 483.5H972M925 484.5H969M920 485.5H974M940 486.5H968M974 486.5H969M931 487.5H995M918 488.5H992M936 489.5H975M923 490.5H985M933 491.5H976M925 492.5H932M938 492.5H977M937 493.5H994M932 494.5H973M902 495.5H981M936 496.5H987M935 497.5H1000M905 498.5H975M919 499.5H972M905 500.5H942M947 500.5H977M934 501.5H1012M932 502.5H968M973 502.5H974M935 503.5H975M934 504.5H939M942 504.5H985M916 505.5H972M933 506.5H973M936 507.5H995M934 508.5H1002M924 509.5H1019M931 510.5H968M934 511.5H976M936 512.5H941M948 512.5H975M941 513.5H969M937 514.5H960M968 514.5H990M932 515.5H1003M1008 515.5H1007M932 516.5H1001M937 517.5H975M934 518.5H951M953 518.5H977M926 519.5H977M940 520.5H968M919 521.5H942M944 521.5H1001M932 522.5H980M984 522.5H988M920 523.5H923M925 523.5H983M937 524.5H970M975 524.5H976M930 525.5H968M924 526.5H930M936 526.5H972M923 527.5H983M916 528.5H1003M925 529.5H982M923 530.5H984M922 531.5H941M945 531.5H975M932 532.5H953M958 532.5H973M919 533.5H963M968 533.5H972M932 534.5H985M937 535.5H958M963 535.5H967M935 536.5H968M974 536.5H968M920 537.5H974M916 538.5H983M938 539.5H981M919 540.5H973M931 541.5H982M930 542.5H971M899 543.5H923M929 543.5H979M932 544.5H954M957 544.5H982M919 545.5H953M958 545.5H970M928 546.5H951M956 546.5H1004M937 547.5H971M893 548.5H965M971 548.5H1000M923 549.5H970M973 549.5H977M930 550.5H979M933 559.5H981M937 560.5H954M956 560.5H977M921 561.5H985M936 562.5H1005M937 563.5H956M959 563.5H969M914 564.5H1006M925 565.5H994M933 566.5H966M968 566.5H987M915 567.5H946M953 567.5H983M945 568.5H974M935 569.5H988M938 570.5H981M932 571.5H974M917 572.5H931M939 572.5H984M946 573.5H977M943 574.5H970M941 575.5H959M965 575.5H974M935 576.5H1015M938 577.5H1010M929 578.5H983M944 579.5H1018M944 580.5H972M938 581.5H949M956 581.5H974M914 582.5H956M963 582.5H986M919 583.5H979M947 584.5H962M965 584.5H984M932 585.5H1025M929 586.5H977M931 587.5H992M938 588.5H979M937 589.5H977M934 590.5H943M946 590.5H988M940 591.5H978M930 592.5H987M911 593.5H975M947 594.5H991M941 595.5H956M962 595.5H971M937 596.5H994M945 597.5H980M937 598.5H989M923 599.5H980M933 600.5H982M937 601.5H983M986 601.5H1018M930 602.5H959M966 602.5H989M936 603.5H1001M1005 603.5H1010M924 604.5H932M940 604.5H991M932 605.5H978M931 606.5H952M959 606.5H1022M946 607.5H972M975 607.5H972M945 608.5H973M937 609.5H982M921 610.5H936M938 610.5H976M938 611.5H976M931 612.5H1009M915 613.5H974M935 614.5H988M944 615.5H992M932 616.5H978M927 617.5H987M993 617.5H1022M933 618.5H967M972 618.5H987M917 619.5H987M921 620.5H974M929 621.5H977M938 622.5H948M951 622.5H1002M933 623.5H971M933 624.5H975M979 624.5H994M941 625.5H957M959 625.5H969M909 628.5H955M907 629.5H945M907 630.5H964M897 631.5H951M892 632.5H928M889 633.5H925M880 634.5H917M877 635.5H917M874 638.5H910M871 639.5H916M855 640.5H916M885 641.5H925M893 642.5H952M903 643.5H933M891 644.5H971M909 645.5H939M943 645.5H947M906 646.5H967M917 647.5H964M903 648.5H983M929 649.5H933M940 649.5H974M932 650.5H936M942 650.5H995M934 651.5H991M921 652.5H1005M946 653.5H963M970 653.5H983M935 654.5H1021M951 655.5H1001M944 656.5H958M966 656.5H997M955 657.5H1032M1037 657.5H1036M961 658.5H1003M967 659.5H1017M971 660.5H1002M968 661.5H1029M1036 661.5H1040M962 662.5H1007M958 663.5H974M977 663.5H996M941 664.5H978M918 665.5H933M935 665.5H975M897 666.5H925M932 666.5H945M901 667.5H925M872 668.5H938M943 668.5H943M883 669.5H886M889 669.5H907M857 670.5H914M879 671.5H920M892 672.5H948M870 673.5H928M879 674.5H942M947 674.5H945M883 675.5H894M898 675.5H935M886 676.5H921M878 677.5H921M884 678.5H922M900 679.5H904M909 679.5H922M901 680.5H934M896 681.5H909M917 681.5H945M898 682.5H928M900 683.5H931M904 684.5H929M900 685.5H963M908 686.5H931M902 687.5H937M904 688.5H932M906 689.5H935M910 690.5H932M912 691.5H937M909 692.5H956M903 693.5H921M929 693.5H939M916 694.5H939M915 695.5H930M933 695.5H949M893 696.5H939M903 697.5H944M908 698.5H943M921 699.5H944M919 700.5H942M909 701.5H945M910 702.5H982M922 703.5H971M921 704.5H948M918 705.5H950M957 705.5H956M919 706.5H977M906 707.5H961M929 708.5H934M937 708.5H952M923 709.5H958M934 710.5H949M919 711.5H954" stroke="#ff00ff" stroke-width="1.05" fill="none"/><line x1="851" y1="305" x2="880" y2="305" stroke="#ff00ff" stroke-width="1.3"/><line x1="870" y1="307" x2="915" y2="307" stroke="#ff00ff" stroke-width="1.3"/><line x1="900" y1="309" x2="935" y2="309" stroke="#ff00ff" stroke-width="1.3"/><line x1="915" y1="311" x2="950" y2="311" stroke="#ff00ff" stroke-width="1.3"/><line x1="851" y1="458" x2="890" y2="458" stroke="#ff00ff" stroke-width="1.3"/><line x1="870" y1="460" x2="906" y2="460" stroke="#ff00ff" stroke-width="1.3"/><line x1="900" y1="462" x2="925" y2="462" stroke="#ff00ff" stroke-width="1.3"/><line x1="851" y1="554" x2="900" y2="554" stroke="#ff00ff" stroke-width="1.3"/><line x1="880" y1="557" x2="940" y2="557" stroke="#ff00ff" stroke-width="1.3"/><line x1="900" y1="628" x2="1060" y2="628" stroke="#ff00ff" stroke-width="1.3"/><line x1="851" y1="631" x2="960" y2="631" stroke="#ff00ff" stroke-width="1.3"/><line x1="851" y1="634" x2="930" y2="634" stroke="#ff00ff" stroke-width="1.3"/><line x1="851" y1="638" x2="880" y2="638" stroke="#ff00ff" stroke-width="1.3"/><line x1="851" y1="666" x2="880" y2="666" stroke="#ff00ff" stroke-width="1.3"/><line x1="870" y1="668" x2="920" y2="668" stroke="#ff00ff" stroke-width="1.3"/><line x1="890" y1="670" x2="930" y2="670" stroke="#ff00ff" stroke-width="1.3"/><path d="M1015 547 L1072 548 L1072 550 L1010 551 Z" fill="#ff00ff"/><line x1="985" y1="500" x2="1012" y2="500" stroke="#ff00ff" stroke-width="1.5"/><line x1="1200" y1="625" x2="1337" y2="625" stroke="#c000c0" stroke-width="2"/><line x1="1000" y1="664.5" x2="1250" y2="664.5" stroke="#5d7fe0" stroke-width="2"/><line x1="1250" y1="664.5" x2="1332" y2="664.5" stroke="#e000e0" stroke-width="2"/><path d="M1171 203.5H1200M1169 204.5H1203M1178 205.5H1198M1175 206.5H1202M1175 207.5H1201M1178 208.5H1203M1167 209.5H1200M1177 210.5H1200M1170 211.5H1199M1169 212.5H1202M1177 213.5H1203M1180 214.5H1202M1166 215.5H1203M1171 216.5H1199M1171 217.5H1198M1178 218.5H1200M1178 219.5H1206M1178 220.5H1202M1174 221.5H1201M1180 222.5H1205M1173 223.5H1202M1168 224.5H1198M1166 225.5H1203M1179 226.5H1201M1179 227.5H1201M1180 228.5H1200M1169 229.5H1200M1173 230.5H1199M1172 231.5H1202M1176 232.5H1200M1175 233.5H1198M1169 234.5H1201M1177 235.5H1198M1178 236.5H1198M1169 237.5H1205M1170 238.5H1199M1181 239.5H1202M1174 240.5H1199M1166 241.5H1202M1175 242.5H1202M1174 243.5H1199M1166 244.5H1203M1176 245.5H1199M1174 246.5H1200M1179 247.5H1199M1168 248.5H1206M1167 249.5H1199M1173 250.5H1200M1177 251.5H1205M1166 252.5H1203M1169 253.5H1203M1171 254.5H1200M1181 255.5H1205M1181 256.5H1202M1166 257.5H1201M1171 258.5H1203M1174 259.5H1200M1172 260.5H1205M1176 261.5H1204M1176 262.5H1203M1180 263.5H1198M1169 264.5H1200M1177 265.5H1199M1169 266.5H1204M1176 267.5H1201M1167 268.5H1198M1173 269.5H1203M1169 270.5H1199M1173 271.5H1202M1171 272.5H1202M1179 273.5H1202M1169 274.5H1203M1176 275.5H1199M1172 276.5H1201M1166 277.5H1202M1171 278.5H1202M1171 279.5H1201M1170 280.5H1201M1169 281.5H1200M1179 282.5H1198M1166 283.5H1200M1167 284.5H1199M1173 285.5H1199M1180 286.5H1201M1174 287.5H1207M1180 288.5H1201M1169 289.5H1198M1173 290.5H1202M1169 291.5H1201M1173 292.5H1199M1166 293.5H1201M1173 294.5H1201M1180 295.5H1203M1169 296.5H1199M1167 297.5H1199M1169 298.5H1202M1172 299.5H1201M1169 300.5H1200M1173 301.5H1203M1169 302.5H1203M1171 303.5H1200M1172 304.5H1200M1170 305.5H1200M1170 306.5H1203M1174 307.5H1203M1169 308.5H1201M1176 309.5H1207M1172 310.5H1201M1170 311.5H1204M1174 312.5H1203M1168 313.5H1199M1179 314.5H1203M1175 315.5H1199M1171 316.5H1201M1175 317.5H1201M1173 318.5H1202M1180 319.5H1202M1169 320.5H1204M1169 321.5H1202M1168 322.5H1199M1168 323.5H1200M1180 324.5H1201M1169 325.5H1200M1172 326.5H1204M1176 327.5H1206M1171 328.5H1201M1179 329.5H1201M1177 330.5H1199M1176 331.5H1198M1181 332.5H1198M1181 333.5H1199M1172 334.5H1200M1168 335.5H1199M1178 336.5H1202M1180 337.5H1201M1172 338.5H1202M1167 339.5H1201M1178 340.5H1199M1168 341.5H1199M1170 342.5H1199M1166 343.5H1202M1176 344.5H1204M1176 345.5H1199M1178 346.5H1206M1171 347.5H1202M1167 348.5H1201M1179 349.5H1200M1174 350.5H1200M1168 351.5H1198M1176 352.5H1199M1178 353.5H1200M1180 354.5H1201M1170 355.5H1203M1168 356.5H1200M1177 357.5H1202M1167 358.5H1203M1168 359.5H1199M1178 360.5H1199M1171 361.5H1199M1168 362.5H1200M1173 363.5H1203M1177 364.5H1202M1168 365.5H1202M1173 366.5H1203M1169 367.5H1202M1178 368.5H1202M1175 369.5H1207M1178 370.5H1199M1172 371.5H1199M1172 372.5H1203M1180 373.5H1208M1178 374.5H1199M1168 375.5H1201M1179 376.5H1204M1177 377.5H1202M1174 378.5H1200M1179 379.5H1199M1171 380.5H1199M1167 381.5H1202M1178 382.5H1203M1173 383.5H1203M1175 384.5H1199M1173 385.5H1202M1171 386.5H1204M1180 387.5H1198M1172 388.5H1198M1171 389.5H1200M1179 390.5H1203M1180 391.5H1199M1169 392.5H1201M1180 393.5H1203M1180 394.5H1201M1180 395.5H1199M1180 396.5H1203M1174 397.5H1199M1175 398.5H1199M1173 399.5H1198M1177 400.5H1199M1175 401.5H1203M1177 402.5H1202M1180 403.5H1202M1167 404.5H1202M1176 405.5H1203M1169 406.5H1199M1168 407.5H1199M1174 408.5H1199M1173 409.5H1203M1168 410.5H1199M1172 411.5H1200M1172 412.5H1201M1179 413.5H1202M1172 414.5H1200M1177 415.5H1203M1178 416.5H1201M1174 417.5H1200M1178 418.5H1198M1171 419.5H1202M1176 420.5H1200M1178 421.5H1199M1180 422.5H1201M1168 423.5H1201M1178 424.5H1199M1177 425.5H1204M1174 426.5H1203M1173 427.5H1200M1167 428.5H1203M1167 429.5H1198M1175 430.5H1199M1176 431.5H1203M1173 432.5H1200M1181 433.5H1202M1171 434.5H1202M1167 435.5H1201M1179 436.5H1201M1179 437.5H1203M1172 438.5H1201M1174 439.5H1199M1175 440.5H1202M1180 441.5H1203M1170 442.5H1203M1181 443.5H1201M1175 444.5H1201M1180 445.5H1202M1177 446.5H1204M1180 447.5H1199M1168 448.5H1202M1177 449.5H1201M1169 450.5H1201M1180 451.5H1203M1177 452.5H1202M1173 453.5H1199M1167 454.5H1203M1176 455.5H1200M1173 456.5H1200M1173 457.5H1201M1180 458.5H1199M1169 459.5H1201M1173 460.5H1202M1169 461.5H1203M1178 462.5H1201M1167 463.5H1204M1169 464.5H1202M1180 465.5H1199M1169 466.5H1199M1172 467.5H1201M1179 468.5H1204M1168 469.5H1205M1171 470.5H1198M1175 471.5H1205M1180 472.5H1201M1171 473.5H1201M1170 474.5H1203M1169 475.5H1201M1176 476.5H1208M1166 477.5H1198M1171 478.5H1201M1175 479.5H1202M1178 480.5H1202M1174 481.5H1204M1167 482.5H1207M1170 483.5H1199M1181 484.5H1203M1177 485.5H1201M1170 486.5H1199M1178 487.5H1199M1172 488.5H1201M1170 489.5H1202M1167 490.5H1200M1169 491.5H1203M1180 492.5H1201M1171 493.5H1199M1174 494.5H1203M1171 495.5H1203M1167 496.5H1200M1175 497.5H1198M1177 498.5H1202M1172 499.5H1201M1166 500.5H1199M1176 501.5H1203M1169 502.5H1200M1167 503.5H1206M1167 504.5H1201M1173 505.5H1202M1178 506.5H1200M1176 507.5H1202M1167 508.5H1203M1167 509.5H1201M1172 510.5H1202M1173 511.5H1198M1176 512.5H1201M1172 513.5H1201M1179 514.5H1203M1178 515.5H1202M1176 516.5H1203M1173 517.5H1200M1169 518.5H1199M1176 519.5H1199M1177 520.5H1202M1174 521.5H1200M1178 522.5H1201M1171 523.5H1200M1169 524.5H1200M1176 525.5H1201M1166 526.5H1203M1178 527.5H1199M1177 528.5H1200M1177 529.5H1204M1172 530.5H1204M1170 531.5H1204M1179 532.5H1200M1168 533.5H1203M1170 534.5H1198M1172 535.5H1202M1169 536.5H1198M1169 537.5H1205M1175 538.5H1200M1175 539.5H1201M1172 540.5H1202M1170 541.5H1202M1167 542.5H1203M1173 543.5H1203M1175 544.5H1203M1178 545.5H1199M1181 546.5H1198M1167 547.5H1198M1170 548.5H1202M1169 549.5H1201M1169 550.5H1202M1174 551.5H1199M1172 552.5H1199M1171 553.5H1202M1171 554.5H1200M1173 555.5H1200M1178 556.5H1200M1180 557.5H1202M1169 558.5H1199M1176 559.5H1199M1171 560.5H1201M1168 561.5H1200M1178 562.5H1201M1175 563.5H1202M1178 564.5H1201M1180 565.5H1203M1169 566.5H1202M1173 567.5H1202M1169 568.5H1202M1167 569.5H1198M1170 570.5H1202M1179 571.5H1203M1180 572.5H1203M1180 573.5H1201M1176 574.5H1201M1180 575.5H1200M1176 576.5H1200M1172 577.5H1201M1177 578.5H1202M1177 579.5H1201M1180 580.5H1200M1177 581.5H1201M1176 582.5H1200M1173 583.5H1199M1174 584.5H1201M1170 585.5H1203M1173 586.5H1205M1172 587.5H1201M1172 588.5H1199M1173 589.5H1201M1166 590.5H1203M1175 591.5H1201M1177 592.5H1199M1173 593.5H1199M1174 594.5H1202M1167 595.5H1199M1173 596.5H1199M1178 597.5H1202M1171 598.5H1199M1169 599.5H1199M1172 600.5H1200M1174 601.5H1200M1173 602.5H1199M1176 603.5H1201M1174 604.5H1202M1181 605.5H1198M1173 606.5H1199M1169 607.5H1201M1173 608.5H1200M1176 609.5H1200M1178 610.5H1199M1166 611.5H1202M1174 612.5H1200M1181 613.5H1200M1171 614.5H1203M1170 615.5H1199M1169 616.5H1201M1174 617.5H1204M1174 618.5H1200M1171 619.5H1201M1168 620.5H1200M1168 621.5H1200M1167 622.5H1198M1178 623.5H1200M1167 624.5H1202M1172 625.5H1203M1176 626.5H1201M1169 627.5H1200M1170 628.5H1201M1169 629.5H1199M1172 630.5H1202M1179 631.5H1207M1175 632.5H1205M1174 633.5H1200M1175 634.5H1199M1176 635.5H1199M1167 636.5H1203M1172 637.5H1202M1175 638.5H1201M1180 639.5H1208M1170 640.5H1202M1179 641.5H1202M1171 642.5H1201M1176 643.5H1199M1171 644.5H1199M1179 645.5H1201M1172 646.5H1198M1179 647.5H1200M1169 648.5H1199M1175 649.5H1201M1172 650.5H1205M1166 651.5H1203M1178 652.5H1199M1169 653.5H1202M1175 654.5H1204M1180 655.5H1200M1180 656.5H1201M1178 657.5H1200M1168 658.5H1202M1179 659.5H1199M1180 660.5H1203M1169 661.5H1203M1166 662.5H1200M1172 663.5H1203M1171 664.5H1200M1171 665.5H1207M1166 666.5H1198M1176 667.5H1204M1166 668.5H1200M1174 669.5H1200M1177 670.5H1202M1179 671.5H1204M1176 672.5H1202M1170 673.5H1201M1175 674.5H1200M1175 675.5H1203M1166 676.5H1200M1175 677.5H1201M1180 678.5H1198M1178 679.5H1198M1172 680.5H1199M1171 681.5H1205M1170 682.5H1201M1169 683.5H1202M1166 684.5H1199M1168 685.5H1202M1167 686.5H1200M1177 687.5H1201M1168 688.5H1203M1178 689.5H1199M1167 690.5H1203M1181 691.5H1201M1171 692.5H1202M1170 693.5H1199M1179 694.5H1200M1178 695.5H1202M1178 696.5H1202M1171 697.5H1202M1167 698.5H1201M1179 699.5H1200M1170 700.5H1202M1176 701.5H1199M1177 702.5H1199M1176 703.5H1200M1180 704.5H1200M1170 705.5H1199M1172 706.5H1203M1179 707.5H1200M1180 708.5H1201M1173 709.5H1203M1180 710.5H1205M1176 711.5H1202" stroke="#ff0000" stroke-width="1.05" fill="none"/><path d="M1142 203.5H1171M1169 204.5H1169M1177 205.5H1178M1160 206.5H1175M1144 209.5H1167M1165 210.5H1177M1158 211.5H1170M1151 212.5H1169M1175 214.5H1180M1160 215.5H1166M1136 217.5H1171M1175 218.5H1178M1176 220.5H1178M1174 221.5H1174M1141 223.5H1173M1158 224.5H1168M1166 225.5H1166M1159 226.5H1179M1174 227.5H1179M1177 228.5H1180M1144 229.5H1169M1159 230.5H1173M1150 231.5H1172M1148 234.5H1169M1142 236.5H1178M1134 237.5H1169M1168 238.5H1170M1177 239.5H1181M1138 240.5H1174M1151 241.5H1166M1175 242.5H1175M1148 243.5H1174M1164 244.5H1166M1137 245.5H1176M1142 246.5H1174M1151 247.5H1179M1168 248.5H1168M1151 249.5H1167M1137 250.5H1173M1152 251.5H1177M1133 252.5H1166M1163 253.5H1169M1158 254.5H1171M1150 255.5H1181M1169 256.5H1181M1142 258.5H1171M1153 259.5H1174M1155 260.5H1172M1140 261.5H1176M1169 262.5H1176M1140 263.5H1180M1142 264.5H1169M1153 265.5H1177M1150 266.5H1169M1175 267.5H1176M1165 268.5H1167M1146 269.5H1173M1145 270.5H1169M1166 272.5H1171M1179 273.5H1179M1150 274.5H1169M1137 275.5H1176M1171 276.5H1172M1166 278.5H1171M1142 279.5H1171M1166 280.5H1170M1155 281.5H1169M1174 282.5H1179M1142 283.5H1166M1162 284.5H1167M1159 285.5H1173M1154 286.5H1180M1173 287.5H1174M1148 288.5H1180M1165 290.5H1173M1130 291.5H1169M1157 292.5H1173M1161 293.5H1166M1144 294.5H1173M1146 295.5H1180M1165 297.5H1167M1142 301.5H1173M1131 302.5H1169M1171 303.5H1171M1152 304.5H1172M1167 305.5H1170M1167 306.5H1170M1169 307.5H1174M1135 308.5H1169M1139 309.5H1176M1172 310.5H1172M1158 311.5H1170M1158 312.5H1174M1138 313.5H1168M1145 314.5H1179M1169 315.5H1175M1145 316.5H1171M1175 317.5H1175M1169 318.5H1173M1143 319.5H1180M1142 321.5H1169M1168 322.5H1168M1149 323.5H1168M1168 324.5H1180M1166 325.5H1169M1150 326.5H1172M1148 327.5H1176M1139 328.5H1171M1162 329.5H1179M1173 330.5H1177M1152 331.5H1176M1172 333.5H1181M1171 334.5H1172M1162 335.5H1168M1174 336.5H1178M1156 337.5H1180M1142 338.5H1172M1138 339.5H1167M1160 340.5H1178M1147 341.5H1168M1144 342.5H1170M1145 343.5H1166M1169 344.5H1176M1148 345.5H1176M1171 346.5H1178M1169 347.5H1171M1164 349.5H1179M1146 350.5H1174M1162 351.5H1168M1151 352.5H1176M1159 354.5H1180M1167 356.5H1168M1166 357.5H1177M1140 358.5H1167M1151 359.5H1168M1166 360.5H1178M1133 362.5H1168M1159 363.5H1173M1139 364.5H1177M1162 365.5H1168M1165 366.5H1173M1157 367.5H1169M1151 368.5H1178M1143 369.5H1175M1169 370.5H1178M1167 372.5H1172M1153 373.5H1180M1147 374.5H1178M1159 375.5H1168M1142 376.5H1179M1144 377.5H1177M1146 378.5H1174M1177 379.5H1179M1170 380.5H1171M1156 381.5H1167M1144 382.5H1178M1140 383.5H1173M1159 384.5H1175M1169 385.5H1173M1169 386.5H1171M1155 387.5H1180M1144 388.5H1172M1167 389.5H1171M1154 390.5H1179M1154 391.5H1180M1166 392.5H1169M1177 393.5H1180M1170 394.5H1180M1145 395.5H1180M1162 397.5H1174M1159 398.5H1175M1148 399.5H1173M1174 400.5H1177M1150 401.5H1175M1146 402.5H1177M1179 403.5H1180M1154 404.5H1167M1170 405.5H1176M1161 406.5H1169M1160 407.5H1168M1135 408.5H1174M1154 409.5H1173M1130 410.5H1168M1148 411.5H1172M1172 412.5H1172M1143 413.5H1179M1150 414.5H1172M1145 415.5H1177M1141 416.5H1178M1140 417.5H1174M1163 418.5H1178M1135 419.5H1171M1156 420.5H1176M1168 421.5H1178M1149 422.5H1180M1168 423.5H1168M1172 424.5H1178M1162 427.5H1173M1129 428.5H1167M1142 429.5H1167M1155 430.5H1175M1134 432.5H1173M1178 433.5H1181M1148 434.5H1171M1153 435.5H1167M1142 436.5H1179M1175 437.5H1179M1143 438.5H1172M1151 439.5H1174M1170 441.5H1180M1140 442.5H1170M1175 443.5H1181M1169 444.5H1175M1177 445.5H1180M1165 446.5H1177M1173 447.5H1180M1162 448.5H1168M1152 449.5H1177M1134 450.5H1169M1150 451.5H1180M1140 452.5H1177M1150 453.5H1173M1164 454.5H1167M1175 455.5H1176M1173 456.5H1173M1164 457.5H1173M1178 458.5H1180M1133 459.5H1169M1165 462.5H1178M1141 463.5H1167M1169 465.5H1180M1162 466.5H1169M1168 467.5H1172M1151 469.5H1168M1164 470.5H1171M1166 471.5H1175M1157 472.5H1180M1152 474.5H1170M1146 475.5H1169M1151 476.5H1176M1136 478.5H1171M1171 479.5H1175M1145 480.5H1178M1150 481.5H1174M1140 482.5H1167M1133 483.5H1170M1178 484.5H1181M1151 486.5H1170M1160 487.5H1178M1160 488.5H1172M1164 489.5H1170M1140 490.5H1167M1154 491.5H1169M1179 492.5H1180M1163 493.5H1171M1166 494.5H1174M1168 495.5H1171M1164 496.5H1167M1174 497.5H1175M1154 498.5H1177M1165 500.5H1166M1153 501.5H1176M1166 502.5H1169M1145 504.5H1167M1176 506.5H1178M1158 508.5H1167M1143 509.5H1167M1140 511.5H1173M1174 512.5H1176M1162 513.5H1172M1160 516.5H1176M1154 517.5H1173M1158 518.5H1169M1148 519.5H1176M1141 520.5H1177M1149 521.5H1174M1165 522.5H1178M1145 523.5H1171M1146 524.5H1169M1166 525.5H1176M1128 526.5H1166M1149 527.5H1178M1162 528.5H1177M1164 529.5H1177M1169 530.5H1172M1138 531.5H1170M1169 532.5H1179M1148 533.5H1168M1170 534.5H1170M1151 535.5H1172M1162 536.5H1169M1150 537.5H1169M1153 538.5H1175M1167 539.5H1175M1133 540.5H1172M1159 541.5H1170M1139 542.5H1167M1168 543.5H1173M1165 544.5H1175M1165 545.5H1178M1181 546.5H1181M1152 547.5H1167M1136 549.5H1169M1149 550.5H1169M1163 552.5H1172M1133 553.5H1171M1149 554.5H1171M1159 555.5H1173M1174 556.5H1178M1166 557.5H1180M1163 558.5H1169M1160 559.5H1176M1150 560.5H1171M1148 561.5H1168M1147 562.5H1178M1136 563.5H1175M1178 564.5H1178M1148 565.5H1180M1135 566.5H1169M1140 567.5H1173M1160 568.5H1169M1164 569.5H1167M1172 571.5H1179M1178 572.5H1180M1177 573.5H1180M1172 574.5H1176M1175 575.5H1180M1139 576.5H1176M1145 577.5H1172M1168 578.5H1177M1174 579.5H1177M1176 580.5H1180M1170 581.5H1177M1171 582.5H1176M1142 583.5H1173M1146 584.5H1174M1140 585.5H1170M1171 586.5H1173M1139 587.5H1172M1168 588.5H1172M1142 589.5H1173M1139 590.5H1166M1167 591.5H1175M1167 592.5H1177M1170 593.5H1173M1141 594.5H1174M1165 595.5H1167M1163 596.5H1173M1178 597.5H1178M1131 598.5H1171M1133 599.5H1169M1143 601.5H1174M1162 602.5H1173M1170 603.5H1176M1141 604.5H1174M1149 605.5H1181M1147 606.5H1173M1169 607.5H1169M1170 608.5H1173M1159 609.5H1176M1142 610.5H1178M1155 611.5H1166M1166 612.5H1174M1142 613.5H1181M1144 614.5H1171M1137 615.5H1170M1166 616.5H1169M1168 617.5H1174M1139 618.5H1174M1135 619.5H1171M1157 620.5H1168M1163 621.5H1168M1165 622.5H1167M1147 623.5H1178M1171 625.5H1172M1161 626.5H1176M1161 627.5H1169M1155 628.5H1170M1144 629.5H1169M1133 630.5H1172M1149 631.5H1179M1145 632.5H1175M1168 633.5H1174M1174 634.5H1175M1152 635.5H1176M1155 636.5H1167M1160 637.5H1172M1149 639.5H1180M1164 641.5H1179M1139 642.5H1171M1171 643.5H1176M1166 644.5H1171M1172 645.5H1179M1172 646.5H1172M1145 648.5H1169M1136 649.5H1175M1140 650.5H1172M1149 651.5H1166M1167 652.5H1178M1148 653.5H1169M1167 654.5H1175M1155 655.5H1180M1170 657.5H1178M1144 658.5H1168M1171 659.5H1179M1159 660.5H1180M1155 661.5H1169M1167 663.5H1172M1155 664.5H1171M1162 665.5H1171M1135 666.5H1166M1158 667.5H1176M1165 668.5H1166M1172 669.5H1174M1157 670.5H1177M1146 671.5H1179M1142 672.5H1176M1142 673.5H1170M1128 676.5H1166M1151 677.5H1175M1179 678.5H1180M1172 679.5H1178M1152 680.5H1172M1134 681.5H1171M1140 682.5H1170M1132 685.5H1168M1159 686.5H1167M1161 687.5H1177M1131 688.5H1168M1148 689.5H1178M1137 690.5H1167M1153 692.5H1171M1138 693.5H1170M1177 694.5H1179M1171 695.5H1178M1176 696.5H1178M1144 697.5H1171M1145 698.5H1167M1170 699.5H1179M1153 700.5H1170M1170 701.5H1176M1144 702.5H1177M1174 704.5H1180M1167 705.5H1170M1141 706.5H1172M1153 707.5H1179M1173 708.5H1180M1144 710.5H1180" stroke="#f00000" stroke-width="1" fill="none"/><path d="M1125 217.5H1155M1128 459.5H1165M1130 314.5H1150M1140 415.5H1174M1141 554.5H1162M1150 705.5H1176M1130 308.5H1161M1139 660.5H1168M1128 426.5H1150M1126 240.5H1148M1131 588.5H1170M1138 416.5H1170M1121 528.5H1160M1133 507.5H1173M1124 373.5H1150M1141 457.5H1161M1135 460.5H1159M1143 232.5H1165M1142 357.5H1180M1132 326.5H1158M1134 665.5H1164M1141 226.5H1164M1139 311.5H1167M1133 675.5H1168M1117 390.5H1148M1130 540.5H1152M1132 245.5H1153M1129 582.5H1164M1131 395.5H1155M1131 300.5H1155M1131 595.5H1165M1142 382.5H1164M1138 570.5H1166M1117 492.5H1143M1139 390.5H1169M1143 532.5H1174M1123 401.5H1160M1115 211.5H1149M1142 425.5H1177M1132 359.5H1164M1125 317.5H1160M1135 384.5H1164M1144 387.5H1183M1118 398.5H1155M1146 499.5H1166M1139 484.5H1172M1126 536.5H1150M1138 606.5H1170M1132 312.5H1153M1146 599.5H1173M1115 603.5H1140M1139 545.5H1162M1131 593.5H1165M1145 547.5H1170M1136 456.5H1171M1150 306.5H1178M1118 216.5H1145M1122 578.5H1145M1141 416.5H1163M1136 589.5H1175" stroke="#b00000" stroke-width="1" fill="none"/><line x1="1053" y1="250" x2="1200" y2="250" stroke="#e02020" stroke-width="1.5" stroke-dasharray="5 2"/><polyline points="1082.5,203 1083.7,204 1082.9,205 1083.5,206 1083.0,207 1084.1,208 1083.9,209 1083.7,210 1084.3,211 1083.0,212 1083.8,213 1084.5,214 1084.0,215 1082.8,216 1082.9,217 1084.2,218 1084.3,219 1083.1,220 1083.3,221 1084.3,222 1084.1,223 1083.3,224 1083.8,225 1084.9,226 1083.0,227 1083.6,228 1084.3,229 1083.6,230 1084.1,231 1084.1,232 1083.4,233 1085.5,234 1084.6,235 1084.4,236 1084.9,237 1085.8,238 1084.0,239 1085.1,240 1085.7,241 1084.9,242 1084.9,243 1085.7,244 1086.9,245 1085.4,246 1087.2,247 1090.0,248 1090.6,249 1092.4,250 1092.3,251 1092.1,252 1092.8,253 1091.8,254 1093.0,255 1092.5,256 1093.3,257 1092.0,258 1091.2,259 1092.6,260 1091.4,261 1092.0,262 1091.6,263 1090.2,264 1090.5,265 1089.5,266 1089.8,267 1089.7,268 1089.4,269 1089.9,270 1090.0,271 1089.2,272 1088.8,273 1087.9,274 1088.4,275 1088.1,276 1088.7,277 1088.1,278 1087.4,279 1088.3,280 1088.9,281 1087.5,282 1088.8,283 1086.9,284 1087.9,285 1087.9,286 1087.1,287 1087.8,288 1088.8,289 1088.1,290 1087.5,291 1088.6,292 1086.8,293 1088.0,294 1086.9,295 1086.4,296 1086.4,297 1087.2,298 1087.3,299 1093.5,300 1100.0,301 1145.0,302 1146.0,303 1147.0,304 1148.0,305 1146.3,306 1144.7,307 1143.0,308 1144.3,309 1145.7,310 1147.0,311 1137.5,312 1128.0,313 1099.7,314 1082.0,315 1082.0,316 1083.1,317 1082.4,318 1083.2,319 1083.6,320 1082.8,321 1082.3,322 1082.4,323 1083.5,324 1083.6,325 1082.0,326 1081.9,327 1082.0,328 1082.3,329 1082.8,330 1081.9,331 1083.1,332 1081.5,333 1083.0,334 1082.6,335 1083.3,336 1081.4,337 1081.6,338 1082.5,339 1082.4,340 1083.4,341 1082.8,342 1081.7,343 1083.3,344 1082.1,345 1082.4,346 1082.3,347 1081.7,348 1082.1,349 1081.5,350 1083.0,351 1081.5,352 1081.0,353 1082.4,354 1082.5,355 1081.5,356 1082.0,357 1081.7,358 1082.9,359 1081.8,360 1082.4,361 1081.9,362 1083.0,363 1081.8,364 1082.0,365 1082.6,366 1082.7,367 1081.5,368 1080.9,369 1082.4,370 1080.9,371 1082.3,372 1081.4,373 1082.5,374 1081.6,375 1082.6,376 1081.0,377 1080.5,378 1080.6,379 1082.5,380 1081.1,381 1080.5,382 1082.2,383 1081.5,384 1080.6,385 1081.4,386 1080.4,387 1080.3,388 1080.6,389 1080.6,390 1080.1,391 1080.4,392 1080.2,393 1081.1,394 1082.0,395 1081.5,396 1082.0,397 1080.4,398 1080.8,399 1081.6,400 1081.7,401 1080.8,402 1082.4,403 1082.2,404 1082.6,405 1081.9,406 1083.5,407 1083.0,408 1083.6,409 1085.3,410 1085.2,411 1084.9,412 1084.4,413 1086.3,414 1085.6,415 1086.4,416 1087.7,417 1087.2,418 1086.5,419 1088.1,420 1086.9,421 1087.8,422 1087.5,423 1089.2,424 1089.1,425 1088.6,426 1089.6,427 1090.6,428 1089.6,429 1090.4,430 1091.0,431 1091.0,432 1090.2,433 1090.4,434 1090.5,435 1091.3,436 1090.9,437 1090.6,438 1090.1,439 1091.0,440 1090.2,441 1090.1,442 1089.9,443 1091.2,444 1090.2,445 1089.9,446 1091.5,447 1091.9,448 1091.4,449 1092.0,450 1092.0,451 1090.4,452 1091.4,453 1090.9,454 1091.0,455 1105.0,456 1146.0,457 1146.7,458 1147.3,459 1148.0,460 1140.0,461 1100.0,462 1095.5,463 1091.8,464 1091.9,465 1092.0,466 1090.9,467 1090.2,468 1090.4,469 1091.9,470 1091.9,471 1090.9,472 1090.8,473 1092.0,474 1091.7,475 1092.0,476 1092.3,477 1092.4,478 1091.2,479 1090.7,480 1091.9,481 1091.3,482 1091.6,483 1092.2,484 1092.5,485 1092.1,486 1090.6,487 1092.0,488 1090.4,489 1091.4,490 1091.6,491 1092.2,492 1092.9,493 1091.9,494 1091.6,495 1091.1,496 1092.7,497 1090.8,498 1092.1,499 1092.7,500 1092.4,501 1091.9,502 1093.0,503 1092.5,504 1090.9,505 1092.9,506 1090.8,507 1091.4,508 1093.1,509 1091.3,510 1092.1,511 1092.9,512 1092.0,513 1091.7,514 1091.5,515 1093.1,516 1092.3,517 1091.4,518 1093.4,519 1091.7,520 1093.3,521 1092.8,522 1092.2,523 1092.9,524 1091.9,525 1092.9,526 1091.8,527 1092.7,528 1092.7,529 1092.4,530 1093.5,531 1093.1,532 1091.8,533 1093.4,534 1092.2,535 1093.5,536 1093.9,537 1091.9,538 1092.4,539 1091.7,540 1093.6,541 1093.2,542 1092.1,543 1093.9,544 1092.5,545 1092.2,546 1094.1,547 1093.7,548 1092.1,549 1094.0,550 1110.0,551 1150.0,552 1150.7,553 1151.3,554 1152.0,555 1148.5,556 1145.0,557 1110.0,558 1101.5,559 1094.2,560 1093.8,561 1093.1,562 1093.3,563 1092.3,564 1093.5,565 1094.4,566 1093.9,567 1092.7,568 1093.7,569 1093.9,570 1092.6,571 1094.5,572 1092.4,573 1092.5,574 1093.0,575 1093.5,576 1093.8,577 1094.7,578 1094.4,579 1094.3,580 1094.1,581 1094.2,582 1092.6,583 1094.3,584 1093.9,585 1094.2,586 1094.0,587 1092.7,588 1094.1,589 1094.8,590 1093.0,591 1094.3,592 1094.9,593 1093.3,594 1094.1,595 1094.2,596 1094.9,597 1094.1,598 1095.1,599 1093.8,600 1095.5,601 1095.0,602 1094.1,603 1095.0,604 1095.1,605 1094.6,606 1095.0,607 1095.1,608 1095.6,609 1095.4,610 1094.8,611 1095.1,612 1094.2,613 1094.1,614 1095.0,615 1094.1,616 1095.5,617 1093.8,618 1094.6,619 1095.1,620 1095.3,621 1094.6,622 1094.4,623 1095.3,624 1077.5,625 1060.0,626 1188.0,627 1184.4,628 1180.8,629 1177.2,630 1173.6,631 1170.0,632 1175.0,633 1180.0,634 1185.0,635 1190.0,636 1180.0,637 1170.0,638 1160.0,639 1150.0,640 1147.0,641 1144.0,642 1141.0,643 1138.0,644 1135.0,645 1132.1,646 1129.2,647 1126.4,648 1123.5,649 1120.6,650 1117.8,651 1114.9,652 1112.0,653 1111.8,654 1111.7,655 1111.5,656 1111.3,657 1111.2,658 1111.0,659 1110.8,660 1110.7,661 1110.5,662 1110.3,663 1110.2,664 1110.0,665 1112.3,666 1114.7,667 1117.0,668 1124.0,669 1131.0,670 1138.0,671 1145.0,672 1145.2,673 1145.5,674 1145.8,675 1146.0,676 1146.2,677 1146.5,678 1146.8,679 1147.0,680 1145.6,681 1144.2,682 1142.8,683 1141.4,684 1140.0,685 1138.6,686 1137.2,687 1135.8,688 1134.4,689 1133.0,690 1132.2,691 1131.3,692 1130.5,693 1129.7,694 1128.8,695 1128.0,696 1127.2,697 1126.3,698 1125.5,699 1124.7,700 1123.8,701 1123.0,702 1122.6,703 1122.1,704 1121.7,705 1121.2,706 1120.8,707 1120.3,708 1119.9,709 1119.4,710 1119.0,711" stroke="#ffff00" stroke-width="1.6" fill="none"/><path d="M1145 307 H1156" stroke="#ffff00" stroke-width="1.3" fill="none"/><polyline points="1125,203 1115.5,300 1125,306 1118,312 1103,455 1102,462 1093,550 1098,558 1091,625 1107,636 1091,654 1089,665 1103,673 1101,679 1091,687 1087,708 1087,711" stroke="#10d010" stroke-width="1.3" fill="none"/><path d="M1170.3 203h3M1170.7 204h3M1169.1 205h3M1168.3 206h3M1169.3 207h3M1170.4 208h3M1169.2 209h3M1167.3 210h3M1168.5 211h3M1169.1 212h3M1167.7 213h3M1170.6 214h3M1168.7 215h3M1169.3 216h3M1167.8 217h3M1168.5 218h3M1167.5 219h3M1169.5 220h3M1170.2 221h3M1167.3 222h3M1167.4 223h3M1167.9 224h3M1168.3 225h3M1170.2 226h3M1170.3 227h3M1170.7 228h3M1169.0 229h3M1167.8 230h3M1170.4 231h3M1169.5 232h3M1169.2 233h3M1168.3 234h3M1167.8 235h3M1168.8 236h3M1168.8 237h3M1167.8 238h3M1168.3 239h3M1167.7 240h3M1168.4 241h3M1168.1 242h3M1168.5 243h3M1170.0 244h3M1169.1 245h3M1169.4 246h3M1168.8 247h3M1169.9 248h3M1167.5 249h3M1169.9 250h3M1169.2 251h3M1169.5 252h3M1170.3 253h3M1169.2 254h3M1169.4 255h3M1167.7 256h3M1168.4 257h3M1170.3 258h3M1167.3 259h3M1167.6 260h3M1167.8 261h3M1170.6 262h3M1168.7 263h3M1170.6 264h3M1168.1 265h3M1167.4 266h3M1169.9 267h3M1168.2 268h3M1167.6 269h3M1168.5 270h3M1169.5 271h3M1170.5 272h3M1168.8 273h3M1169.5 274h3M1167.4 275h3M1168.3 276h3M1169.8 277h3M1167.6 278h3M1168.3 279h3M1167.4 280h3M1169.8 281h3M1169.1 282h3M1169.7 283h3M1168.5 284h3M1169.2 285h3M1169.3 286h3M1168.8 287h3M1167.7 288h3M1167.5 289h3M1170.3 290h3M1169.5 291h3M1169.7 292h3M1169.6 293h3M1168.8 294h3M1167.3 295h3M1170.5 296h3M1168.2 297h3M1170.5 298h3M1167.9 299h3M1178.5 314h3M1177.1 315h3M1175.7 316h3M1176.1 317h3M1177.6 318h3M1178.6 319h3M1176.8 320h3M1177.4 321h3M1178.2 322h3M1175.2 323h3M1176.1 324h3M1176.0 325h3M1177.8 326h3M1177.9 327h3M1178.5 328h3M1176.6 329h3M1178.4 330h3M1175.7 331h3M1178.3 332h3M1178.3 333h3M1177.9 334h3M1177.3 335h3M1178.7 336h3M1178.1 337h3M1175.2 338h3M1178.2 339h3M1176.0 340h3M1176.3 341h3M1177.2 342h3M1178.0 343h3M1178.5 344h3M1175.3 345h3M1176.8 346h3M1175.7 347h3M1177.4 348h3M1175.7 349h3M1137.4 350h3M1137.6 351h3M1136.4 352h3M1137.5 353h3M1137.8 354h3M1138.7 355h3M1137.7 356h3M1137.2 357h3M1137.2 358h3M1135.2 359h3M1136.9 360h3M1138.2 361h3M1136.6 362h3M1137.2 363h3M1135.3 364h3M1137.0 365h3M1138.5 366h3M1136.9 367h3M1135.5 368h3M1136.6 369h3M1136.0 370h3M1137.6 371h3M1137.5 372h3M1136.8 373h3M1137.1 374h3M1138.2 375h3M1138.6 376h3M1137.3 377h3M1137.1 378h3M1137.1 379h3M1137.0 380h3M1138.3 381h3M1138.7 382h3M1136.0 383h3M1136.8 384h3M1136.7 385h3M1137.0 386h3M1137.8 387h3M1137.2 388h3M1138.5 389h3M1137.6 390h3M1136.0 391h3M1136.1 392h3M1136.1 393h3M1136.4 394h3M1136.6 395h3M1136.2 396h3M1135.3 397h3M1136.7 398h3M1138.5 399h3M1138.0 400h3M1136.6 401h3M1137.8 402h3M1137.9 403h3M1137.3 404h3M1137.5 405h3M1135.8 406h3M1136.8 407h3M1138.3 408h3M1136.6 409h3M1135.6 410h3M1138.6 411h3M1136.4 412h3M1137.5 413h3M1137.0 414h3M1135.3 415h3M1137.8 416h3M1138.6 417h3M1138.3 418h3M1136.0 419h3M1136.5 420h3M1137.4 421h3M1137.4 422h3M1136.4 423h3M1137.3 424h3M1138.5 425h3M1136.6 426h3M1137.9 427h3M1138.6 428h3M1138.4 429h3M1136.4 430h3M1137.8 431h3M1138.1 432h3M1135.7 433h3M1138.0 434h3M1135.3 435h3M1138.3 436h3M1138.3 437h3M1136.9 438h3M1138.7 439h3M1136.3 440h3M1136.0 441h3M1137.0 442h3M1135.2 443h3M1136.0 444h3M1136.7 445h3M1136.1 446h3M1136.4 447h3M1137.1 448h3M1135.5 449h3M1137.1 450h3M1137.7 451h3M1137.5 452h3M1135.5 453h3M1137.2 454h3M1139.8 464h3M1138.6 465h3M1139.3 466h3M1140.5 467h3M1139.9 468h3M1138.4 469h3M1137.3 470h3M1138.3 471h3M1137.3 472h3M1137.4 473h3M1137.4 474h3M1139.2 475h3M1139.1 476h3M1138.9 477h3M1139.3 478h3M1138.4 479h3M1139.1 480h3M1138.1 481h3M1137.6 482h3M1140.6 483h3M1139.9 484h3M1140.0 485h3M1140.3 486h3M1138.8 487h3M1138.0 488h3M1137.8 489h3M1139.8 490h3M1140.1 491h3M1140.6 492h3M1138.4 493h3M1140.2 494h3M1138.9 495h3M1140.0 496h3M1138.1 497h3M1139.4 498h3M1139.3 499h3M1140.1 500h3M1137.5 501h3M1140.7 502h3M1139.2 503h3M1140.3 504h3M1137.4 505h3M1140.1 506h3M1140.2 507h3M1138.4 508h3M1138.7 509h3M1140.2 510h3M1138.3 511h3M1137.9 512h3M1139.7 513h3M1140.2 514h3M1139.2 515h3M1137.7 516h3M1138.8 517h3M1139.3 518h3M1139.6 519h3M1139.8 520h3M1139.8 521h3M1140.7 522h3M1137.3 523h3M1140.2 524h3M1138.4 525h3M1137.4 526h3M1138.1 527h3M1138.1 528h3M1137.6 529h3M1138.8 530h3M1140.6 531h3M1139.5 532h3M1138.0 533h3M1138.0 534h3M1137.6 535h3M1139.3 536h3M1137.6 537h3M1138.8 538h3M1140.8 539h3M1140.6 540h3M1140.1 541h3M1138.9 542h3M1137.8 543h3M1138.6 544h3M1138.8 545h3M1139.1 546h3M1139.6 547h3M1137.5 548h3M1139.2 549h3M1139.0 550h3M1147.5 560h3M1148.1 561h3M1150.1 562h3M1150.3 563h3M1147.5 564h3M1149.6 565h3M1148.7 566h3M1150.7 567h3M1148.6 568h3M1147.7 569h3M1150.3 570h3M1149.0 571h3M1150.5 572h3M1148.2 573h3M1147.5 574h3M1161.4 575h3M1174.4 576h3M1171.8 577h3M1172.5 578h3M1173.3 579h3M1174.1 580h3M1172.1 581h3M1172.8 582h3M1174.1 583h3M1174.3 584h3M1173.0 585h3M1173.0 586h3M1173.1 587h3M1174.0 588h3M1171.7 589h3M1172.0 590h3M1174.2 591h3M1172.4 592h3M1171.5 593h3M1171.6 594h3M1171.8 595h3M1172.9 596h3M1174.7 597h3M1174.4 598h3M1172.9 599h3M1172.7 600h3M1173.3 601h3M1173.1 602h3M1171.9 603h3M1174.7 604h3M1174.6 605h3M1171.7 606h3M1173.9 607h3M1172.4 608h3M1172.4 609h3M1172.0 610h3M1173.5 611h3M1171.9 612h3M1174.6 613h3M1171.9 614h3M1174.4 615h3M1174.6 616h3M1174.6 617h3M1173.9 618h3M1174.2 619h3M1171.4 620h3M1173.6 621h3M1171.2 622h3M1173.7 623h3M1174.6 624h3" stroke="#20e8f8" stroke-width="1.8" fill="none"/><line x1="851" y1="300.5" x2="1170" y2="300.5" stroke="#20d8e8" stroke-width="1.6"/><line x1="851" y1="309" x2="1180" y2="309" stroke="#4aa8d0" stroke-width="1.6"/><line x1="851" y1="456" x2="1136" y2="456" stroke="#20d8e8" stroke-width="1.6"/><line x1="851" y1="461.5" x2="1146" y2="461.5" stroke="#4aa8d0" stroke-width="1.6"/><line x1="851" y1="552" x2="1150" y2="552" stroke="#20d8e8" stroke-width="1.6"/><line x1="851" y1="556" x2="1150" y2="556" stroke="#4aa8d0" stroke-width="1.6"/><line x1="851" y1="626" x2="1144" y2="626" stroke="#20d8e8" stroke-width="1.6"/><line x1="851" y1="636" x2="1135" y2="636" stroke="#20d8e8" stroke-width="1.6"/><line x1="851" y1="664.5" x2="1000" y2="664.5" stroke="#5d8fd8" stroke-width="1.6"/><line x1="851" y1="671.6" x2="1146" y2="671.6" stroke="#20d8e8" stroke-width="1.6"/><line x1="883" y1="710.7" x2="1166" y2="710.7" stroke="#20d8e8" stroke-width="1.6"/><line x1="1138" y1="350.5" x2="1180" y2="350.5" stroke="#20e8f8" stroke-width="1.6"/><line x1="1150" y1="575.5" x2="1175" y2="575.5" stroke="#20e8f8" stroke-width="1.6"/><ellipse cx="865" cy="304" rx="2.5" ry="2" fill="#20e8f8"/><ellipse cx="857" cy="632" rx="2.5" ry="2" fill="#20e8f8"/><ellipse cx="861" cy="666" rx="2.5" ry="2" fill="#20e8f8"/><ellipse cx="1178" cy="345" rx="2.5" ry="2" fill="#20e8f8"/><ellipse cx="1140" cy="460" rx="2.5" ry="2" fill="#20e8f8"/><ellipse cx="1150" cy="555" rx="2.5" ry="2" fill="#20e8f8"/><ellipse cx="1174" cy="580" rx="2.5" ry="2" fill="#20e8f8"/><ellipse cx="1190" cy="208" rx="2.5" ry="2" fill="#20e8f8"/><ellipse cx="1170" cy="223" rx="2.5" ry="2" fill="#20e8f8"/><ellipse cx="1170" cy="244" rx="2.5" ry="2" fill="#20e8f8"/><ellipse cx="1180" cy="640" rx="2.5" ry="2" fill="#20e8f8"/><ellipse cx="1168" cy="700" rx="2.5" ry="2" fill="#20e8f8"/><path d="M1175 643h3M1176 707h4M1170 696h2M1168 697h2M1176 660h4M1170 699h3M1172 708h3M1177 683h2M1175 648h2M1176 696h2M1171 707h2M1176 701h2M1169 655h3M1177 651h4M1177 706h3M1167 668h3M1174 640h4M1174 693h4M1178 661h4M1167 641h2M1168 668h3M1178 690h2M1171 684h2M1178 704h3M1174 665h4M1175 640h3M1168 692h3M1170 669h3M1173 689h3M1167 689h2M1170 653h2M1167 702h4M1175 651h4M1168 644h4M1176 656h4M1169 707h4M1171 693h3M1168 684h3M1177 698h2M1169 697h4M1167 699h3M1172 667h3M1177 678h4M1170 710h2M1176 709h2" stroke="#20e8f8" stroke-width="2" fill="none"/><rect x="851" y="729.8" width="559.5" height="2.8" fill="#e020e0"/><line x1="907" y1="728" x2="907" y2="735" stroke="#9a9a9a" stroke-width="1"/><line x1="963" y1="728" x2="963" y2="735" stroke="#9a9a9a" stroke-width="1"/><line x1="1019" y1="728" x2="1019" y2="735" stroke="#9a9a9a" stroke-width="1"/><line x1="1075" y1="728" x2="1075" y2="735" stroke="#9a9a9a" stroke-width="1"/><line x1="1131" y1="728" x2="1131" y2="735" stroke="#9a9a9a" stroke-width="1"/><line x1="1187" y1="728" x2="1187" y2="735" stroke="#9a9a9a" stroke-width="1"/><line x1="1243" y1="728" x2="1243" y2="735" stroke="#9a9a9a" stroke-width="1"/><line x1="1299" y1="728" x2="1299" y2="735" stroke="#9a9a9a" stroke-width="1"/><line x1="1355" y1="728" x2="1355" y2="735" stroke="#9a9a9a" stroke-width="1"/><path d="M898 737 L905 737 L901.5 731.5 Z" fill="#fff"/><rect x="851" y="198.7" width="559.5" height="3.2" fill="#dc2020"/><path d="M1174 196 L1182 196 L1178 203 Z" fill="#fff"/></svg>
<div class="t" style="left:851.5px;top:149.7px;font-size:10.5px;font-weight:bold;color:#ffff00;font-family:"Liberation Sans",sans-serif;">0</div>
<div class="t" style="left:831.0px;width:600px;text-align:center;top:149.7px;font-size:10.5px;font-weight:bold;color:#ffff00;font-family:"Liberation Sans",sans-serif;">100</div>
<div class="t" style="left:809.0px;width:600px;text-align:right;top:149.7px;font-size:10.5px;font-weight:bold;color:#ffff00;font-family:"Liberation Sans",sans-serif;">200</div>
<div class="t" style="left:851.5px;top:184.1px;font-size:10.5px;font-weight:bold;color:#ff2020;font-family:"Liberation Sans",sans-serif;">0</div>
<div class="t" style="left:831.0px;width:600px;text-align:center;top:184.1px;font-size:10.5px;font-weight:bold;color:#ff2020;font-family:"Liberation Sans",sans-serif;">100</div>
<div class="t" style="left:809.0px;width:600px;text-align:right;top:184.1px;font-size:10.5px;font-weight:bold;color:#ff2020;font-family:"Liberation Sans",sans-serif;">200</div>
<div class="t" style="left:851.5px;top:738.1px;font-size:10.5px;font-weight:bold;color:#ff00ff;font-family:"Liberation Sans",sans-serif;">0</div>
<div class="t" style="left:830.0px;width:600px;text-align:center;top:738.1px;font-size:10.5px;font-weight:bold;color:#ff00ff;font-family:"Liberation Sans",sans-serif;">500</div>
<div class="t" style="left:809.0px;width:600px;text-align:right;top:738.1px;font-size:10.5px;font-weight:bold;color:#ff00ff;font-family:"Liberation Sans",sans-serif;">1000</div>
<div class="t" style="left:1379.0px;top:260.9px;font-size:14px;color:#fff;letter-spacing:-1px;">16:20</div>
<div class="t" style="left:1379.0px;top:348.8px;font-size:14px;color:#fff;letter-spacing:-1px;">16:30</div>
<div class="t" style="left:1379.0px;top:436.7px;font-size:14px;color:#fff;letter-spacing:-1px;">16:40</div>
<div class="t" style="left:1379.0px;top:524.6px;font-size:14px;color:#fff;letter-spacing:-1px;">16:50</div>
<div class="t" style="left:1379.0px;top:612.5px;font-size:14px;color:#fff;letter-spacing:-1px;">17:00</div>
<div class="t" style="left:1379.0px;top:700.4px;font-size:14px;color:#fff;letter-spacing:-1px;">17:10</div>
<div class="t" style="left:1310.0px;top:205.1px;font-size:14px;font-weight:bold;color:#fff;letter-spacing:0.2px;">ГЗ=1809</div>
<div class="t" style="left:1310.0px;top:366.1px;font-size:14px;font-weight:bold;color:#fff;letter-spacing:0.2px;">ГЗ=1810</div>
<div class="t" style="left:1310.0px;top:521.4px;font-size:14px;font-weight:bold;color:#fff;letter-spacing:0.2px;">ГЗ=1811</div>
<div class="r" style="left:850px;top:750px;width:560px;height:7px;overflow:hidden;">
<div class="t" style="left:0;width:560px;text-align:center;top:2.0px;font-size:13px;letter-spacing:0.7px;font-weight:bold;color:#111">Момент на роторі</div>
</div>
<div class="r" style="left:1411.0px;top:131.0px;width:21.0px;height:626.0px;background:#e8e8e8;"></div>
<div class="r" style="left:1411.0px;top:131.0px;width:19.0px;height:20.0px;background:#f0f0f0;border-top:1px solid #fff;border-left:1px solid #fff;border-bottom:1px solid #6a6a6a;border-right:1px solid #6a6a6a;box-sizing:border-box;"></div>
<div class="r" style="left:1411.0px;top:152.0px;width:19.0px;height:545.0px;background:#f0f0f0;border-top:1px solid #fff;border-left:1px solid #fff;border-bottom:1px solid #6a6a6a;border-right:1px solid #6a6a6a;box-sizing:border-box;"></div>
<div class="r" style="left:1411.0px;top:697.0px;width:19.0px;height:40.0px;background:#fafafa;"></div>
<div class="r" style="left:1411.0px;top:737.0px;width:19.0px;height:20.0px;background:#f0f0f0;border-top:1px solid #fff;border-left:1px solid #fff;border-bottom:1px solid #6a6a6a;border-right:1px solid #6a6a6a;box-sizing:border-box;"></div>
<svg style="left:1411px;top:131px" width="19" height="20"><path d="M5 13 L14 13 L9.5 8 Z" fill="#111"/></svg>
<svg style="left:1411px;top:737px" width="19" height="20"><path d="M5 8 L14 8 L9.5 13 Z" fill="#111"/></svg>
<div class="t" style="left:52.5px;top:768.8px;font-size:12.1px;color:#111;">А; 21.09.2025 16:56:51; Шлам с 1810</div>
</body></html>
